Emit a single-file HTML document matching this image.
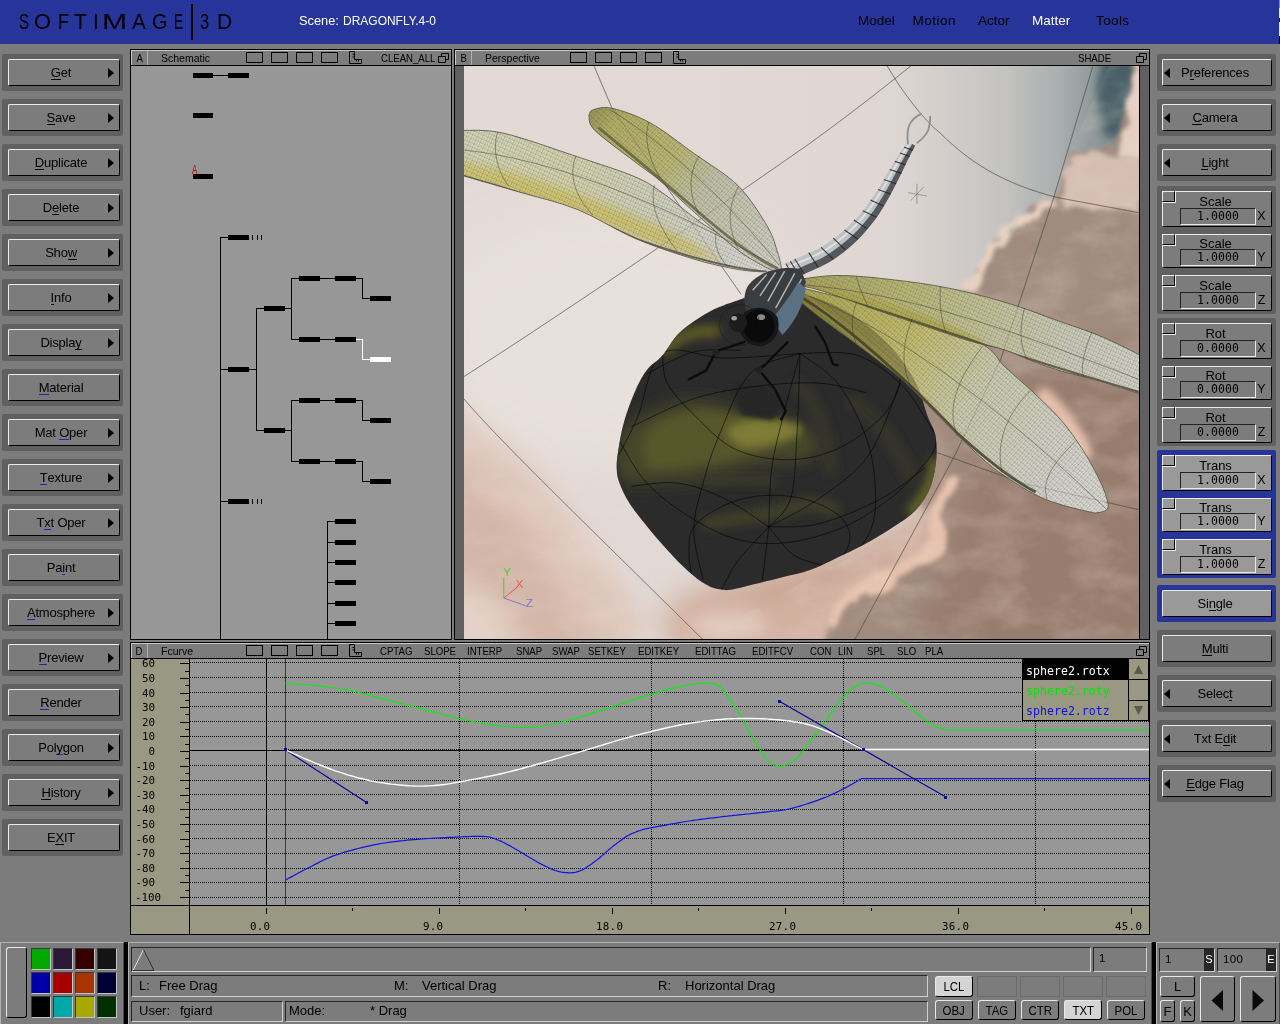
<!DOCTYPE html>
<html><head><meta charset="utf-8"><title>SOFTIMAGE 3D - DRAGONFLY</title>
<style>
*{box-sizing:border-box;margin:0;padding:0}
html,body{width:1280px;height:1024px;overflow:hidden;background:#7c7c7c}
body{position:relative;font-family:"Liberation Sans",sans-serif;font-size:13px;color:#000;line-height:1}
.a{position:absolute}
.top{left:0;top:0;width:1279px;height:44px;background:#27359b}
.lg{position:absolute;top:10px;font-size:22.5px;line-height:24px;transform-origin:0 0;white-space:nowrap}
.menu{top:13px;font-size:13.5px;white-space:nowrap;line-height:15px}
.well{position:absolute;width:121px;height:37px;background:#606060;border-radius:2px}
.rw{width:119px}
.btn{position:absolute;left:6px;top:5px;width:112px;height:27px;background:#7c7c7c;border:1px solid;border-color:#ececec #000 #000 #ececec;border-radius:2px;text-align:center;line-height:25px;font-size:13px;letter-spacing:-0.2px;white-space:nowrap}
.rw .btn{left:5px;width:110px}
.btn span.t{position:absolute;left:0;width:104px;top:0;text-align:center}
.rw .btn span.t{left:0px;width:104px}
.ar{position:absolute;right:5px;top:8px;width:0;height:0;border-left:6px solid #000;border-top:5.5px solid transparent;border-bottom:5.5px solid transparent}
.al{position:absolute;left:1px;top:8px;width:0;height:0;border-right:6px solid #000;border-top:5.5px solid transparent;border-bottom:5.5px solid transparent}
u{text-decoration:none;border-bottom:1px solid #000;display:inline-block;line-height:12px}
u.b{border-bottom-color:#1a2ab0}
.grp{position:absolute;left:1157px;width:119px;height:128px;background:#606060;border-radius:2px}
.pbtn{position:absolute;left:5px;width:110px;background:#7c7c7c;border:1px solid;border-color:#ececec #000 #000 #ececec;border-radius:2px}
.pbtn .lb{position:absolute;left:0;width:105px;text-align:center;top:3px;font-size:13px;line-height:14px}
.pbtn .ck{position:absolute;left:-1px;top:-1px;width:13px;height:11px;border:1px solid;border-color:#ececec #000 #000 #ececec;box-shadow:1px 1px 0 #ececec}
.pbtn .fld{position:absolute;left:17px;top:16px;width:76px;height:17px;border:1px solid;border-color:#222 #e8e8e8 #e8e8e8 #222;font-family:"DejaVu Sans Mono",monospace;font-size:11.5px;line-height:15px;text-align:center;letter-spacing:0.1px}
.pbtn .ax{position:absolute;left:92.5px;top:17px;font-size:12.5px;line-height:14px;width:12px;text-align:center}
.sel{background:#27359b}
.sel .btn,.sel .pbtn{background:#999}

.tb{position:absolute;height:17px;background:#7c7c7c;border:1px solid #000;font-size:11px;line-height:15px;white-space:nowrap}
.tb:before{content:"";position:absolute;left:0;top:0;right:0;height:1px;background:#c8c8c8}
.tb:after{content:"";position:absolute;left:0;top:0;bottom:0;width:1px;background:#c8c8c8}
.tb .k{position:absolute;left:1px;top:0.5px;width:16px;height:14.5px;border-right:1px solid #b0b0b0;text-align:center;font-size:11.3px}
.tb .k b{font-weight:400;display:inline-block;transform:scaleX(.85)}
.tb span{position:absolute;top:0.5px;font-size:11.3px;transform-origin:0 0;transform:scaleX(.93)}
.tb span.u{transform:scaleX(.85)}
.tb .r{position:absolute;top:2px;width:17px;height:11px;border:1px solid #000}
.mx{position:absolute;top:2px;width:11px;height:11px}
.mx:before{content:"";position:absolute;right:0;top:0;width:8px;height:8px;border:1px solid #000}
.mx:after{content:"";position:absolute;left:0;bottom:0;width:8px;height:8px;border:1px solid #000;background:#7c7c7c}
.pan{position:absolute;background:#979797;border:1px solid #000;border-top:none}
.nd{position:absolute;width:21px;height:5px;background:#000}
.mono{font-family:"DejaVu Sans Mono",monospace}

.bp{position:absolute;top:942px;height:82px;background:#7c7c7c;border-top:1px solid #b4b4b4;border-left:1px solid #b4b4b4;border-right:1px solid #4a4a4a}
.sk{position:absolute;border:1px solid;border-color:#262626 #d0d0d0 #d0d0d0 #262626;font-size:13px;line-height:19px;white-space:nowrap}
.sk span{position:absolute;top:0}
.sw{position:absolute;width:20px;height:22px;border:1px solid;border-color:#3a3a3a #c4c4c4 #c4c4c4 #3a3a3a}
.rb{position:absolute;border:1px solid;border-color:#e8e8e8 #000 #000 #e8e8e8;border-radius:3px;background:#7c7c7c;text-align:center;font-size:13px}
.rb b{font-weight:400;display:inline-block;transform:scaleX(.88)}
.sl{position:absolute;top:976px;width:40px;height:21px;border:1px solid #6c6c6c}
</style></head><body>
<div id="app" style="position:absolute;left:0;top:0;width:1280px;height:1024px;will-change:transform">
<div class="a top"></div>
<div class="a" style="left:1279px;top:0;width:1px;height:44px;background:linear-gradient(#8a8a8a 0 8px,#e8e8e8 8px 18px,#10108a 18px 22px,#e8e8e8 22px 36px,#000 36px)"></div>
<span class="lg" style="left:18.88px;transform:scaleX(0.671)">S</span><span class="lg" style="left:34.14px;transform:scaleX(0.968)">O</span><span class="lg" style="left:57.65px;transform:scaleX(0.796)">F</span><span class="lg" style="left:74.23px;transform:scaleX(0.931)">T</span><span class="lg" style="left:92.72px;transform:scaleX(0.925)">I</span><span class="lg" style="left:102.42px;transform:scaleX(1.342)">M</span><span class="lg" style="left:131.90px;transform:scaleX(0.922)">A</span><span class="lg" style="left:151.83px;transform:scaleX(0.890)">G</span><span class="lg" style="left:174.32px;transform:scaleX(0.600)">E</span><span class="lg" style="left:199.72px;transform:scaleX(0.730)">3</span><span class="lg" style="left:216.72px;transform:scaleX(0.934)">D</span><div class="a" style="left:191px;top:4px;width:2px;height:36px;background:#000"></div>
<div class="a menu" style="left:299px;color:#fff;transform-origin:0 0;transform:scaleX(.95)">Scene:</div><div class="a menu" style="left:343px;color:#fff;transform-origin:0 0;transform:scaleX(.888)">DRAGONFLY.4-0</div>
<div class="a menu" style="left:858px">Model</div>
<div class="a menu" style="left:912.5px;letter-spacing:.5px">Motion</div>
<div class="a menu" style="left:978px">Actor</div>
<div class="a menu" style="left:1032px;color:#fff">Matter</div>
<div class="a menu" style="left:1096px;letter-spacing:.4px">Tools</div>
<div class="well" style="left:2px;top:54px"><div class="btn"><span class="t"><u>G</u>et</span><i class="ar"></i></div></div>
<div class="well" style="left:2px;top:99px"><div class="btn"><span class="t"><u>S</u>ave</span><i class="ar"></i></div></div>
<div class="well" style="left:2px;top:144px"><div class="btn"><span class="t"><u>D</u>uplicate</span><i class="ar"></i></div></div>
<div class="well" style="left:2px;top:189px"><div class="btn"><span class="t">D<u>e</u>lete</span><i class="ar"></i></div></div>
<div class="well" style="left:2px;top:234px"><div class="btn"><span class="t">Sho<u>w</u></span><i class="ar"></i></div></div>
<div class="well" style="left:2px;top:279px"><div class="btn"><span class="t"><u>I</u>nfo</span><i class="ar"></i></div></div>
<div class="well" style="left:2px;top:324px"><div class="btn"><span class="t">Displa<u>y</u></span><i class="ar"></i></div></div>
<div class="well" style="left:2px;top:369px"><div class="btn"><span class="t"><u class="b">M</u>aterial</span></div></div>
<div class="well" style="left:2px;top:414px"><div class="btn"><span class="t">Mat <u class="b">O</u>per</span><i class="ar"></i></div></div>
<div class="well" style="left:2px;top:459px"><div class="btn"><span class="t"><u class="b">T</u>exture</span><i class="ar"></i></div></div>
<div class="well" style="left:2px;top:504px"><div class="btn"><span class="t">T<u class="b">x</u>t Oper</span><i class="ar"></i></div></div>
<div class="well" style="left:2px;top:549px"><div class="btn"><span class="t">Pa<u class="b">i</u>nt</span></div></div>
<div class="well" style="left:2px;top:594px"><div class="btn"><span class="t"><u class="b">A</u>tmosphere</span><i class="ar"></i></div></div>
<div class="well" style="left:2px;top:639px"><div class="btn"><span class="t"><u class="b">P</u>review</span><i class="ar"></i></div></div>
<div class="well" style="left:2px;top:684px"><div class="btn"><span class="t"><u class="b">R</u>ender</span></div></div>
<div class="well" style="left:2px;top:729px"><div class="btn"><span class="t">Pol<u class="b">y</u>gon</span><i class="ar"></i></div></div>
<div class="well" style="left:2px;top:774px"><div class="btn"><span class="t"><u>H</u>istory</span><i class="ar"></i></div></div>
<div class="well" style="left:2px;top:819px"><div class="btn"><span class="t">E<u>X</u>IT</span></div></div>
<div class="well rw" style="left:1157px;top:54px"><div class="btn"><span class="t">P<u>r</u>eferences</span><i class="al"></i></div></div>
<div class="well rw" style="left:1157px;top:99px"><div class="btn"><span class="t"><u>C</u>amera</span><i class="al"></i></div></div>
<div class="well rw" style="left:1157px;top:144px"><div class="btn"><span class="t"><u>L</u>ight</span><i class="al"></i></div></div>
<div class="well rw sel" style="left:1157px;top:585px"><div class="btn"><span class="t">Si<u>n</u>gle</span></div></div>
<div class="well rw" style="left:1157px;top:630px"><div class="btn"><span class="t"><u>M</u>ulti</span></div></div>
<div class="well rw" style="left:1157px;top:675px"><div class="btn"><span class="t">Selec<u>t</u></span><i class="al"></i></div></div>
<div class="well rw" style="left:1157px;top:720px"><div class="btn"><span class="t">Txt E<u>d</u>it</span><i class="al"></i></div></div>
<div class="well rw" style="left:1157px;top:765px"><div class="btn"><span class="t"><u>E</u>dge Flag</span><i class="al"></i></div></div>
<div class="grp" style="top:186px"><div class="pbtn" style="top:5px;height:36px"><i class="ck"></i><span class="lb" style="top:3px">Scale</span><span class="fld" style="top:16px">1.0000</span><span class="ax" style="top:17px">X</span></div><div class="pbtn" style="top:48px;height:34px"><i class="ck"></i><span class="lb" style="top:2px">Scale</span><span class="fld" style="top:14px">1.0000</span><span class="ax" style="top:15px">Y</span></div><div class="pbtn" style="top:89px;height:36px"><i class="ck"></i><span class="lb" style="top:3px">Scale</span><span class="fld" style="top:16px">1.0000</span><span class="ax" style="top:17px">Z</span></div></div>
<div class="grp" style="top:318px"><div class="pbtn" style="top:5px;height:36px"><i class="ck"></i><span class="lb" style="top:3px">Rot</span><span class="fld" style="top:16px">0.0000</span><span class="ax" style="top:17px">X</span></div><div class="pbtn" style="top:48px;height:34px"><i class="ck"></i><span class="lb" style="top:2px">Rot</span><span class="fld" style="top:14px">0.0000</span><span class="ax" style="top:15px">Y</span></div><div class="pbtn" style="top:89px;height:36px"><i class="ck"></i><span class="lb" style="top:3px">Rot</span><span class="fld" style="top:16px">0.0000</span><span class="ax" style="top:17px">Z</span></div></div>
<div class="grp sel" style="top:450px"><div class="pbtn" style="top:5px;height:36px"><i class="ck"></i><span class="lb" style="top:3px">Trans</span><span class="fld" style="top:16px">1.0000</span><span class="ax" style="top:17px">X</span></div><div class="pbtn" style="top:48px;height:34px"><i class="ck"></i><span class="lb" style="top:2px">Trans</span><span class="fld" style="top:14px">1.0000</span><span class="ax" style="top:15px">Y</span></div><div class="pbtn" style="top:89px;height:36px"><i class="ck"></i><span class="lb" style="top:3px">Trans</span><span class="fld" style="top:16px">1.0000</span><span class="ax" style="top:17px">Z</span></div></div>
<div class="tb" style="left:130px;top:49px;width:322px"><div class="k"><b>A</b></div><span style="left:30px">Schematic</span><i class="r" style="left:115px"></i><i class="r" style="left:140px"></i><i class="r" style="left:165px"></i><i class="r" style="left:190px"></i><svg class="a" style="left:218px;top:1px" width="14" height="14" viewBox="0 0 14 14"><path d="M0.5 0.5h5v8h7v4h-12z M3.5 3.5h2 M3.5 6h2 M7.5 8.5v2 M9.5 8.5v2" fill="none" stroke="#000" stroke-width="1"/></svg><span class="u" style="left:250px">CLEAN_ALL</span><svg class="a" style="left:307px;top:3px" width="11" height="10" viewBox="0 0 11 10"><path d="M3.5 0.5h7v6h-7z" fill="none" stroke="#000"/><path d="M0.5 3.5h7v6h-7z" fill="#7c7c7c" stroke="#000"/></svg></div>
<div class="pan" style="left:130px;top:66px;width:322px;height:574px;overflow:hidden"><i class="nd" style="left:62px;top:7px;width:20px"></i><i class="a" style="left:82px;top:9px;width:15px;height:1px;background:#000"></i><i class="nd" style="left:97px;top:7px"></i><i class="nd" style="left:62px;top:47px;width:20px"></i><i class="nd" style="left:62px;top:108px;width:20px"></i><span class="a" style="left:61px;top:98px;color:#c40808;font-size:12px;line-height:12px;transform-origin:0 0;transform:scaleX(.66)">A</span><i class="a" style="left:89px;top:171px;width:1px;height:403px;background:#000"></i><i class="a" style="left:89px;top:171px;width:8px;height:1px;background:#000"></i><i class="nd" style="left:97px;top:169px"></i><i class="a" style="left:121px;top:169px;width:1px;height:5px;background:#000"></i><i class="a" style="left:126px;top:169px;width:1px;height:5px;background:#000"></i><i class="a" style="left:130px;top:169px;width:1px;height:5px;background:#000"></i><i class="a" style="left:89px;top:303px;width:8px;height:1px;background:#000"></i><i class="nd" style="left:97px;top:301px"></i><i class="a" style="left:118px;top:303px;width:7px;height:1px;background:#000"></i><i class="a" style="left:125px;top:242px;width:1px;height:123px;background:#000"></i><i class="a" style="left:125px;top:242px;width:8px;height:1px;background:#000"></i><i class="nd" style="left:133px;top:240px"></i><i class="a" style="left:154px;top:242px;width:6px;height:1px;background:#000"></i><i class="a" style="left:160px;top:212px;width:1px;height:62px;background:#000"></i><i class="a" style="left:160px;top:212px;width:8px;height:1px;background:#000"></i><i class="nd" style="left:168px;top:210px"></i><i class="a" style="left:189px;top:212px;width:15px;height:1px;background:#000"></i><i class="nd" style="left:204px;top:210px"></i><i class="a" style="left:160px;top:273px;width:8px;height:1px;background:#000"></i><i class="nd" style="left:168px;top:271px"></i><i class="a" style="left:189px;top:273px;width:15px;height:1px;background:#000"></i><i class="nd" style="left:204px;top:271px"></i><i class="a" style="left:125px;top:364px;width:8px;height:1px;background:#000"></i><i class="nd" style="left:133px;top:362px"></i><i class="a" style="left:154px;top:364px;width:6px;height:1px;background:#000"></i><i class="a" style="left:160px;top:334px;width:1px;height:62px;background:#000"></i><i class="a" style="left:160px;top:334px;width:8px;height:1px;background:#000"></i><i class="nd" style="left:168px;top:332px"></i><i class="a" style="left:189px;top:334px;width:15px;height:1px;background:#000"></i><i class="nd" style="left:204px;top:332px"></i><i class="a" style="left:160px;top:395px;width:8px;height:1px;background:#000"></i><i class="nd" style="left:168px;top:393px"></i><i class="a" style="left:189px;top:395px;width:15px;height:1px;background:#000"></i><i class="nd" style="left:204px;top:393px"></i><i class="a" style="left:225px;top:212px;width:6px;height:1px;background:#000"></i><i class="a" style="left:231px;top:212px;width:1px;height:21px;background:#000"></i><i class="a" style="left:231px;top:232px;width:8px;height:1px;background:#000"></i><i class="nd" style="left:239px;top:230px"></i><i class="a" style="left:225px;top:273px;width:6px;height:1px;background:#fff"></i><i class="a" style="left:231px;top:273px;width:1px;height:21px;background:#fff"></i><i class="a" style="left:231px;top:293px;width:8px;height:1px;background:#fff"></i><i class="nd" style="left:239px;top:291px;background:#fff"></i><i class="a" style="left:225px;top:334px;width:6px;height:1px;background:#000"></i><i class="a" style="left:231px;top:334px;width:1px;height:21px;background:#000"></i><i class="a" style="left:231px;top:354px;width:8px;height:1px;background:#000"></i><i class="nd" style="left:239px;top:352px"></i><i class="a" style="left:225px;top:395px;width:6px;height:1px;background:#000"></i><i class="a" style="left:231px;top:395px;width:1px;height:21px;background:#000"></i><i class="a" style="left:231px;top:415px;width:8px;height:1px;background:#000"></i><i class="nd" style="left:239px;top:413px"></i><i class="a" style="left:89px;top:435px;width:8px;height:1px;background:#000"></i><i class="nd" style="left:97px;top:433px"></i><i class="a" style="left:121px;top:433px;width:1px;height:5px;background:#000"></i><i class="a" style="left:126px;top:433px;width:1px;height:5px;background:#000"></i><i class="a" style="left:130px;top:433px;width:1px;height:5px;background:#000"></i><i class="a" style="left:196px;top:455px;width:1px;height:119px;background:#000"></i><i class="a" style="left:196px;top:455px;width:8px;height:1px;background:#000"></i><i class="nd" style="left:204px;top:453px"></i><i class="a" style="left:196px;top:476px;width:8px;height:1px;background:#000"></i><i class="nd" style="left:204px;top:474px"></i><i class="a" style="left:196px;top:496px;width:8px;height:1px;background:#000"></i><i class="nd" style="left:204px;top:494px"></i><i class="a" style="left:196px;top:516px;width:8px;height:1px;background:#000"></i><i class="nd" style="left:204px;top:514px"></i><i class="a" style="left:196px;top:537px;width:8px;height:1px;background:#000"></i><i class="nd" style="left:204px;top:535px"></i><i class="a" style="left:196px;top:557px;width:8px;height:1px;background:#000"></i><i class="nd" style="left:204px;top:555px"></i></div>
<div class="tb" style="left:454px;top:49px;width:696px"><div class="k"><b>B</b></div><span style="left:30px">Perspective</span><i class="r" style="left:115px"></i><i class="r" style="left:140px"></i><i class="r" style="left:165px"></i><i class="r" style="left:190px"></i><svg class="a" style="left:218px;top:1px" width="14" height="14" viewBox="0 0 14 14"><path d="M0.5 0.5h5v8h7v4h-12z M3.5 3.5h2 M3.5 6h2 M7.5 8.5v2 M9.5 8.5v2" fill="none" stroke="#000" stroke-width="1"/></svg><span class="u" style="left:623px">SHADE</span><svg class="a" style="left:681px;top:3px" width="11" height="10" viewBox="0 0 11 10"><path d="M3.5 0.5h7v6h-7z" fill="none" stroke="#000"/><path d="M0.5 3.5h7v6h-7z" fill="#7c7c7c" stroke="#000"/></svg></div>
<div class="pan" style="left:454px;top:66px;width:696px;height:574px;background:#606060"><div class="a" style="left:9px;top:0;width:676px;height:573px;background:#d8cfcb;border-right:1px solid #000;overflow:hidden"><svg class="a" style="left:0;top:0" width="676" height="574" viewBox="0 0 1206 1024" preserveAspectRatio="none"><defs>
<filter id="b8" filterUnits="userSpaceOnUse" x="-150" y="-150" width="1506" height="1324"><feGaussianBlur stdDeviation="8"/></filter>
<filter id="b14" filterUnits="userSpaceOnUse" x="-150" y="-150" width="1506" height="1324"><feGaussianBlur stdDeviation="14"/></filter>
<filter id="b25" filterUnits="userSpaceOnUse" x="-150" y="-150" width="1506" height="1324"><feGaussianBlur stdDeviation="25"/></filter>
<filter id="b45" filterUnits="userSpaceOnUse" x="-150" y="-150" width="1506" height="1324"><feGaussianBlur stdDeviation="45"/></filter>
<filter id="b4" filterUnits="userSpaceOnUse" x="-150" y="-150" width="1506" height="1324"><feGaussianBlur stdDeviation="4"/></filter>
<filter id="cl" filterUnits="userSpaceOnUse" x="-150" y="-150" width="1506" height="1324"><feTurbulence type="fractalNoise" baseFrequency="0.018" numOctaves="3" seed="7" result="n"/><feDisplacementMap in="SourceGraphic" in2="n" scale="42" xChannelSelector="R" yChannelSelector="G"/><feGaussianBlur stdDeviation="5"/></filter>
<filter id="cl2" filterUnits="userSpaceOnUse" x="-150" y="-150" width="1506" height="1324"><feTurbulence type="fractalNoise" baseFrequency="0.03" numOctaves="3" seed="3" result="n"/><feDisplacementMap in="SourceGraphic" in2="n" scale="30" xChannelSelector="R" yChannelSelector="G"/><feGaussianBlur stdDeviation="4"/></filter>
<filter id="mot" filterUnits="userSpaceOnUse" x="0" y="0" width="1206" height="1024"><feTurbulence type="fractalNoise" baseFrequency="0.012 0.02" numOctaves="4" seed="11"/><feColorMatrix type="matrix" values="0 0 0 0 0.86  0 0 0 0 0.72  0 0 0 0 0.64  1.6 0 0 0 -0.62"/></filter>
<linearGradient id="sky" x1="0" y1="0" x2="1" y2="0"><stop offset="0" stop-color="#e4dad5"/><stop offset="0.62" stop-color="#e0d7d3"/><stop offset="0.72" stop-color="#d2cdca"/><stop offset="0.80" stop-color="#c3c3c1"/><stop offset="0.88" stop-color="#aaafaf"/><stop offset="0.94" stop-color="#8a9698"/><stop offset="1" stop-color="#6e8084"/></linearGradient>
<pattern id="cells" width="9" height="7" patternUnits="userSpaceOnUse" patternTransform="rotate(24)"><path d="M0 0.5H9M0.5 0V7M5 3.5V7" stroke="#34341c" stroke-width="0.9" stroke-opacity="0.4" fill="none"/></pattern>
<pattern id="cells2" width="9" height="7" patternUnits="userSpaceOnUse" patternTransform="rotate(40)"><path d="M0 0.5H9M0.5 0V7M5 3.5V7" stroke="#34341c" stroke-width="0.9" stroke-opacity="0.4" fill="none"/></pattern>
<clipPath id="cmot"><path d="M0 600L160 700L420 1024L1206 1024L1206 0L1150 0L1060 200L900 380L850 560L850 800L640 900L420 1024L0 1024Z"/></clipPath><clipPath id="sph"><path d="M489.0 418.0C473.5 423.4 454.4 429.1 437.0 438.7C419.6 448.2 398.7 462.2 384.8 475.3C370.9 488.4 363.1 506.1 353.5 517.0C343.9 528.0 335.2 530.9 327.3 541.0C319.4 551.1 313.4 561.9 306.4 577.6C299.4 593.3 290.7 616.7 285.5 635.0C280.3 653.3 277.2 673.4 275.0 687.4C272.8 701.4 271.9 709.1 272.4 718.7C272.8 728.3 273.8 734.4 277.7 744.9C281.6 755.4 286.9 767.6 296.0 781.5C305.1 795.4 320.3 813.7 332.5 828.5C344.7 843.3 357.7 858.1 369.0 870.3C380.3 882.5 390.0 892.6 400.5 901.7C411.0 910.9 422.2 919.8 431.8 925.2C441.4 930.6 450.1 932.5 458.0 934.0C465.9 935.5 469.3 935.5 478.9 934.0C488.5 932.5 500.7 928.9 515.5 925.2C530.3 921.5 550.7 916.4 567.7 912.0C584.7 907.6 601.4 904.7 617.4 899.0C633.4 893.3 648.2 885.4 664.0 878.0C679.8 870.6 695.5 863.7 712.3 854.6C729.0 845.5 748.8 833.8 764.5 823.3C780.2 812.8 795.0 804.1 806.3 791.9C817.6 779.7 826.3 765.8 832.4 750.1C838.5 734.4 841.6 713.5 842.9 697.8C844.2 682.1 842.9 668.2 840.3 656.0C837.7 643.8 832.9 639.9 827.2 624.7C821.5 609.5 816.4 585.0 806.0 565.0C795.6 545.0 781.8 523.8 765.0 505.0C748.2 486.2 725.8 466.5 705.0 452.0C684.2 437.5 661.7 426.3 640.0 418.0C618.3 409.7 593.3 404.0 575.0 402.0C556.7 400.0 544.3 403.3 530.0 406.0C515.7 408.7 504.5 412.6 489.0 418.0Z"/></clipPath>
<clipPath id="cLU"><path d="M222.8 88.0C224.1 86.3 223.6 80.1 230.6 78.0C237.6 75.9 247.6 71.6 264.6 75.5C281.6 79.4 308.1 88.1 332.5 101.6C356.9 115.1 384.9 137.8 411.0 156.5C437.1 175.2 467.5 192.2 489.3 214.0C511.1 235.8 529.8 267.0 541.6 287.0C553.4 307.0 555.8 322.2 559.9 334.0C564.0 345.8 565.0 354.0 566.0 358.0L566.0 366.0C562.8 365.5 559.6 369.2 546.8 363.0C534.0 356.8 511.9 346.0 489.3 329.0C466.7 312.0 434.5 281.9 411.0 261.0C387.5 240.1 365.6 218.3 348.2 203.5C330.8 188.7 325.5 186.8 306.4 172.0C287.2 157.2 247.2 128.7 233.3 114.7C219.4 100.7 224.6 92.5 222.8 88.0Z"/></clipPath><clipPath id="cLL"><path d="M-2.0 114.7C10.2 115.6 37.0 112.2 71.0 120.0C105.0 127.8 162.8 148.8 202.0 161.8C241.2 174.9 280.3 187.0 306.4 198.3C332.5 209.6 338.7 215.8 358.7 229.7C378.7 243.6 400.5 264.6 426.6 282.0C452.7 299.4 492.3 320.7 515.5 334.0C538.7 347.3 557.6 357.3 566.0 362.0L568.0 368.0C564.5 368.0 559.9 368.8 546.8 368.0C533.7 367.2 511.9 366.9 489.3 363.0C466.7 359.1 441.5 353.9 411.0 344.7C380.5 335.5 341.2 322.8 306.4 308.0C271.6 293.2 236.8 269.7 202.0 255.8C167.2 241.9 131.4 234.5 97.4 224.5C63.4 214.5 14.6 200.5 -2.0 195.7Z"/></clipPath><clipPath id="cRU"><path d="M578.8 383.7C593.0 382.0 633.1 374.1 664.0 373.7C694.9 373.3 730.9 377.4 764.4 381.2C797.9 385.0 831.3 389.6 864.7 396.3C898.1 403.0 931.5 411.4 965.0 421.4C998.5 431.4 1036.1 446.1 1065.4 456.5C1094.7 466.9 1116.6 473.8 1140.7 484.0C1164.8 494.2 1198.5 512.3 1210.0 518.0L1210.0 586.0C1202.6 583.6 1181.4 576.8 1165.7 571.9C1150.0 567.0 1132.3 561.4 1115.6 556.8C1098.9 552.2 1082.1 549.3 1065.4 544.3C1048.7 539.3 1031.9 533.0 1015.2 526.7C998.5 520.4 980.0 511.6 965.0 506.6C950.0 501.6 937.5 499.9 925.0 496.6C912.5 493.3 908.2 492.5 889.8 486.6C871.4 480.8 839.7 469.9 814.6 461.5C789.5 453.1 768.6 446.4 739.3 436.4C710.0 426.4 665.5 409.4 639.0 401.3C612.5 393.2 589.8 390.2 580.0 388.0Z"/></clipPath><clipPath id="cRL"><path d="M573.7 389.0C594.8 394.2 659.0 409.0 700.0 420.0C741.0 431.0 782.5 442.2 820.0 455.0C857.5 467.8 900.8 483.0 925.0 496.6C949.2 510.2 950.0 522.5 965.0 536.7C980.0 550.9 998.5 566.0 1015.2 581.9C1031.9 597.8 1050.4 614.5 1065.4 632.1C1080.5 649.7 1093.8 668.9 1105.5 687.3C1117.2 705.7 1128.5 727.3 1135.6 742.4C1142.7 757.5 1146.5 769.2 1148.2 777.6C1149.9 786.0 1149.5 789.3 1145.7 792.6C1141.9 795.9 1128.9 796.8 1125.6 797.6L1125.6 797.6C1115.6 795.1 1083.8 788.5 1065.4 782.6C1047.0 776.8 1035.3 773.4 1015.2 762.5C995.1 751.6 965.9 733.3 945.0 717.4C924.1 701.5 907.4 683.9 889.8 667.2C872.2 650.5 857.2 634.6 839.6 617.0C822.0 599.4 805.3 580.2 784.4 561.8C763.5 543.4 738.4 525.0 714.2 506.6C690.0 488.2 660.7 468.2 639.0 451.5C617.3 434.8 594.7 416.2 583.8 406.3C572.9 396.4 575.4 394.4 573.7 392.0Z"/></clipPath>
<linearGradient id="gLU" gradientUnits="userSpaceOnUse" x1="225" y1="90" x2="565" y2="360"><stop offset="0" stop-color="#9c985a"/><stop offset="0.1" stop-color="#b4b068"/><stop offset="0.38" stop-color="#bcb878"/><stop offset="0.55" stop-color="#c2c2aa"/><stop offset="1" stop-color="#d0d0c9"/></linearGradient>
<linearGradient id="gLL" gradientUnits="userSpaceOnUse" x1="0" y1="150" x2="565" y2="365"><stop offset="0" stop-color="#d3d4ba"/><stop offset="0.3" stop-color="#d4d3b0"/><stop offset="0.6" stop-color="#d1d1c0"/><stop offset="0.85" stop-color="#d5d5cf"/><stop offset="1" stop-color="#dededa"/></linearGradient>
<linearGradient id="gRU" gradientUnits="userSpaceOnUse" x1="580" y1="385" x2="1206" y2="550"><stop offset="0" stop-color="#a6a25e"/><stop offset="0.3" stop-color="#b9b678"/><stop offset="0.55" stop-color="#c3c29a"/><stop offset="0.8" stop-color="#cbcbbd"/><stop offset="1" stop-color="#d0d0c8"/></linearGradient>
<linearGradient id="gRL" gradientUnits="userSpaceOnUse" x1="575" y1="390" x2="1150" y2="790"><stop offset="0" stop-color="#aea652"/><stop offset="0.35" stop-color="#c3bd72"/><stop offset="0.55" stop-color="#cbcbb0"/><stop offset="0.8" stop-color="#d2d2ca"/><stop offset="1" stop-color="#dbdbd6"/></linearGradient>
</defs><rect width="1206" height="1024" fill="url(#sky)"/><ellipse cx="260" cy="480" rx="330" ry="230" fill="#e9e1db" filter="url(#b45)" opacity="0.9"/><path d="M-40 600L120 720L330 1000L260 1080L-40 1080Z" fill="#dec6ba" filter="url(#b25)"/><path d="M-40 700L90 800L250 1060L-40 1060Z" fill="#d3b7a8" filter="url(#b25)"/><path d="M-40 900L60 960L120 1060L-40 1060Z" fill="#e4d2c8" filter="url(#b25)"/><path d="M360 960L500 890L700 860L830 780L900 820L860 1060L360 1060Z" fill="#d2b1a1" filter="url(#b25)"/><path d="M520 950C600 930 680 900 760 860" stroke="#c6a494" stroke-width="26" fill="none" filter="url(#b14)" opacity="0.8"/><ellipse cx="470" cy="1000" rx="70" ry="26" fill="#e6d0c4" filter="url(#b14)" opacity="0.8"/><path d="M1140 -20L1210 -20L1195 60L1172 135L1140 120L1128 40Z" fill="#4a6068" filter="url(#b8)"/><path d="M902 392C915 360 945 315 971 285C1000 262 1035 252 1053 241C1062 220 1066 200 1069 183C1072 172 1074 166 1078 163C1100 152 1120 148 1135 147C1150 148 1160 152 1167 155C1170 135 1172 118 1175 102C1180 80 1184 60 1188 41L1200 -20L1260 -20L1260 1080L600 1080C640 1000 686 943 738 915C811 890 853 855 845 802C846 785 840 765 800 750C770 700 790 560 860 500C880 470 892 430 902 392Z" fill="#a18b7e" filter="url(#cl)"/><path d="M960 560L1260 480L1260 1080L780 1080C850 900 900 700 960 560Z" fill="#967c6d" filter="url(#b25)" opacity="0.9"/><ellipse cx="828" cy="715" rx="34" ry="80" fill="#ab9384" filter="url(#b8)"/><path d="M1066 250C1068 215 1072 180 1080 168C1110 152 1140 150 1168 160L1206 160L1206 255C1160 262 1110 262 1066 250Z" fill="#d6beb2" filter="url(#cl2)"/><path d="M1172 160C1174 120 1182 70 1200 -10L1230 -10L1230 170Z" fill="#e6cec2" filter="url(#cl2)"/><path d="M902 396C915 362 945 318 971 289C1000 266 1035 256 1056 244" stroke="#e8d0c0" stroke-width="14" fill="none" filter="url(#cl2)" stroke-linecap="round"/><path d="M864 742C843 790 853 850 811 886C760 905 700 930 660 985" stroke="#e6c2ae" stroke-width="26" fill="none" filter="url(#cl)" stroke-linecap="round"/><path d="M1035 590C1065 620 1090 650 1105 690" stroke="#e6c0ac" stroke-width="30" fill="none" filter="url(#b8)" stroke-linecap="round"/><g clip-path="url(#cmot)"><rect width="1206" height="1024" filter="url(#mot)" opacity="0.32"/></g><path d="M232 0L264 75L494 407 M0 554C120 478 400 290 617 138C690 85 750 38 797 0 M755 0C790 60 830 105 850 120C900 170 960 210 1060 235L1206 262 M1122 0L1052 235L958 522L874 698L697 1024 M0 594C60 665 200 800 427 1024 M845 690L1000 745L1206 792" stroke="#4a4a48" stroke-width="1.1" fill="none" opacity="0.8"/><path d="M489.0 418.0C473.5 423.4 454.4 429.1 437.0 438.7C419.6 448.2 398.7 462.2 384.8 475.3C370.9 488.4 363.1 506.1 353.5 517.0C343.9 528.0 335.2 530.9 327.3 541.0C319.4 551.1 313.4 561.9 306.4 577.6C299.4 593.3 290.7 616.7 285.5 635.0C280.3 653.3 277.2 673.4 275.0 687.4C272.8 701.4 271.9 709.1 272.4 718.7C272.8 728.3 273.8 734.4 277.7 744.9C281.6 755.4 286.9 767.6 296.0 781.5C305.1 795.4 320.3 813.7 332.5 828.5C344.7 843.3 357.7 858.1 369.0 870.3C380.3 882.5 390.0 892.6 400.5 901.7C411.0 910.9 422.2 919.8 431.8 925.2C441.4 930.6 450.1 932.5 458.0 934.0C465.9 935.5 469.3 935.5 478.9 934.0C488.5 932.5 500.7 928.9 515.5 925.2C530.3 921.5 550.7 916.4 567.7 912.0C584.7 907.6 601.4 904.7 617.4 899.0C633.4 893.3 648.2 885.4 664.0 878.0C679.8 870.6 695.5 863.7 712.3 854.6C729.0 845.5 748.8 833.8 764.5 823.3C780.2 812.8 795.0 804.1 806.3 791.9C817.6 779.7 826.3 765.8 832.4 750.1C838.5 734.4 841.6 713.5 842.9 697.8C844.2 682.1 842.9 668.2 840.3 656.0C837.7 643.8 832.9 639.9 827.2 624.7C821.5 609.5 816.4 585.0 806.0 565.0C795.6 545.0 781.8 523.8 765.0 505.0C748.2 486.2 725.8 466.5 705.0 452.0C684.2 437.5 661.7 426.3 640.0 418.0C618.3 409.7 593.3 404.0 575.0 402.0C556.7 400.0 544.3 403.3 530.0 406.0C515.7 408.7 504.5 412.6 489.0 418.0Z" fill="#2b2b2b"/><g clip-path="url(#sph)"><path d="M285.0 650.0C302.3 627.5 351.9 607.7 382.0 600.0C412.1 592.3 445.2 599.5 465.6 604.0C486.0 608.5 487.0 622.2 504.6 627.0C522.2 631.8 553.6 629.5 571.5 632.7C589.4 635.9 600.6 638.1 612.0 646.0C623.4 653.9 642.0 670.2 640.0 680.0C638.0 689.8 619.8 699.7 600.0 705.0C580.2 710.3 548.4 707.0 521.4 712.0C494.3 717.0 465.6 730.0 437.7 735.0C409.8 740.0 380.6 742.0 354.0 742.0C327.4 742.0 289.5 750.3 278.0 735.0C266.5 719.7 267.7 672.5 285.0 650.0Z" fill="#47472a" filter="url(#b14)"/><path d="M330.0 650.0C341.7 633.8 376.7 623.0 400.0 618.0C423.3 613.0 443.3 616.3 470.0 620.0C496.7 623.7 538.3 633.3 560.0 640.0C581.7 646.7 606.7 651.7 600.0 660.0C593.3 668.3 550.0 681.3 520.0 690.0C490.0 698.7 451.7 707.8 420.0 712.0C388.3 716.2 345.0 725.3 330.0 715.0C315.0 704.7 318.3 666.2 330.0 650.0Z" fill="#56562c" filter="url(#b8)"/><path d="M470.0 648.0C473.3 639.7 502.5 632.3 520.0 630.0C537.5 627.7 561.0 631.0 575.0 634.0C589.0 637.0 604.8 642.3 604.0 648.0C603.2 653.7 587.3 662.7 570.0 668.0C552.7 673.3 516.7 683.3 500.0 680.0C483.3 676.7 466.7 656.3 470.0 648.0Z" fill="#7e7b36" filter="url(#b8)"/><path d="M354 512C375 485 410 468 456 474" stroke="#5a5828" stroke-width="22" fill="none" filter="url(#b8)"/><path d="M588 566C630 590 650 660 655 728" stroke="#343429" stroke-width="26" fill="none" filter="url(#b8)"/><path d="M688 594C745 630 780 694 800 740" stroke="#363629" stroke-width="26" fill="none" filter="url(#b8)"/><path d="M842 700C838 740 820 775 795 800" stroke="#5e5e2c" stroke-width="22" fill="none" filter="url(#b8)"/><path d="M426 817C470 808 532 806 600 784C630 780 650 788 668 795" stroke="#3d3d29" stroke-width="26" fill="none" filter="url(#b8)"/><path d="M426 738H556" stroke="#38382a" stroke-width="20" fill="none" filter="url(#b8)"/><path d="M480 572C510 560 555 568 572 612L548 632L495 622Z" fill="#272727" filter="url(#b4)"/><path d="M354.1 512.8C355.5 521.6 353.2 547.7 362.5 565.8C371.8 583.9 389.9 602.0 409.9 621.5C429.8 641.0 454.4 669.4 482.3 682.9C510.2 696.3 546.4 702.4 577.1 702.4C607.8 702.4 638.4 695.4 666.3 682.9C694.2 670.3 725.8 646.6 744.4 627.1C762.9 607.6 774.1 583.4 777.8 565.8C781.5 548.1 768.5 528.6 766.6 521.2M278.8 671.7C286.7 683.8 305.3 721.9 326.2 744.2C347.1 766.5 377.3 788.8 404.3 805.5C431.2 822.2 459.1 837.1 487.9 844.5C516.7 852.0 545.5 853.8 577.1 850.1C608.7 846.4 645.9 836.2 677.5 822.2C709.0 808.3 740.6 787.8 766.6 766.5C792.7 745.1 821.0 711.7 833.6 694.0C846.1 676.3 840.5 666.1 841.9 660.5M409.9 928.2C408.5 918.9 401.5 890.1 401.5 872.4C401.5 854.7 399.2 837.1 409.9 822.2C420.5 807.4 445.2 792.5 465.6 783.2C486.0 773.9 509.3 768.3 532.5 766.5C555.7 764.6 582.7 766.5 605.0 772.0C627.3 777.6 652.4 788.8 666.3 799.9C680.2 811.1 687.7 825.9 688.6 839.0C689.5 852.0 681.2 868.7 671.9 878.0C662.6 887.3 639.4 891.9 632.9 894.7M599.4 512.8C594.8 530.0 579.9 582.0 571.5 616.0C563.2 649.9 553.9 681.9 549.2 716.3C544.6 750.7 544.6 804.6 543.6 822.2M599.4 512.8C584.5 518.9 534.4 524.4 510.2 549.0C486.0 573.7 468.4 628.0 454.4 660.5C440.5 693.1 434.0 716.3 426.6 744.2C419.1 772.0 409.9 799.0 409.9 827.8C409.9 856.6 423.8 902.1 426.6 917.0M599.4 512.8C610.5 521.6 646.8 541.2 666.3 565.8C685.8 590.4 705.3 630.8 716.5 660.5C727.6 690.3 731.3 717.2 733.2 744.2C735.1 771.1 735.1 799.0 727.6 822.2C720.2 845.5 695.1 873.3 688.6 883.5M599.4 512.8C598.5 537.4 596.6 617.3 593.8 660.5C591.0 703.8 591.0 745.1 582.7 772.0C574.3 799.0 550.2 813.9 543.6 822.2M599.4 512.8C577.1 514.2 506.5 521.2 465.6 521.2C424.7 521.2 380.1 495.2 354.1 512.8C328.1 530.5 322.5 596.9 309.5 627.1C296.5 657.3 281.6 682.9 276.1 694.0M599.4 512.8C616.1 513.3 670.0 506.8 699.8 515.6C729.5 524.4 757.4 547.2 777.8 565.8C798.2 584.4 811.7 611.3 822.4 627.1C833.1 642.9 838.7 655.0 841.9 660.5M543.6 822.2C530.6 813.9 492.5 785.1 465.6 772.0C438.7 759.0 409.9 747.9 382.0 744.2C354.1 740.5 312.3 748.8 298.4 749.8M543.6 822.2C558.5 813.9 603.1 793.4 632.9 772.0C662.6 750.7 697.9 728.4 722.0 694.0C746.2 659.6 768.5 587.1 777.8 565.8M543.6 822.2C541.8 838.0 534.4 901.2 532.5 917.0M543.6 822.2C534.4 832.4 501.8 865.0 487.9 883.5C474.0 902.1 464.7 925.4 460.0 933.7M543.6 822.2C551.1 830.6 571.5 860.8 588.2 872.4C605.0 884.0 634.7 888.7 644.0 891.9M543.6 822.2C558.5 821.3 599.4 825.0 632.9 816.7C666.3 808.3 712.8 788.8 744.4 772.0C775.9 755.3 809.4 725.6 822.4 716.3M298.4 643.8C316.9 635.5 372.7 605.7 409.9 593.6C447.0 581.6 484.2 576.0 521.4 571.4C558.5 566.7 600.3 563.9 632.9 565.8C665.4 567.6 702.5 579.7 716.5 582.5M326.2 549.0C340.2 542.5 382.0 517.0 409.9 510.0C437.7 503.1 479.5 507.7 493.5 507.2" stroke="#000" stroke-width="1.2" fill="none" opacity="0.85"/></g><path d="M-2.0 114.7C10.2 115.6 37.0 112.2 71.0 120.0C105.0 127.8 162.8 148.8 202.0 161.8C241.2 174.9 280.3 187.0 306.4 198.3C332.5 209.6 338.7 215.8 358.7 229.7C378.7 243.6 400.5 264.6 426.6 282.0C452.7 299.4 492.3 320.7 515.5 334.0C538.7 347.3 557.6 357.3 566.0 362.0L568.0 368.0C564.5 368.0 559.9 368.8 546.8 368.0C533.7 367.2 511.9 366.9 489.3 363.0C466.7 359.1 441.5 353.9 411.0 344.7C380.5 335.5 341.2 322.8 306.4 308.0C271.6 293.2 236.8 269.7 202.0 255.8C167.2 241.9 131.4 234.5 97.4 224.5C63.4 214.5 14.6 200.5 -2.0 195.7Z" fill="url(#gLL)"/><g clip-path="url(#cLL)"><path d="M-10 168C100 190 250 240 380 300C420 322 440 335 460 350L400 338C300 305 180 258 -10 204Z" fill="#cfc060" opacity="0.75" filter="url(#b8)"/><path d="M-2 195.7C97 224 202 256 306 308C411 345 489 363 540 367" stroke="#5a5440" stroke-width="3.5" fill="none" opacity=".85"/></g><path d="M-2.0 114.7C10.2 115.6 37.0 112.2 71.0 120.0C105.0 127.8 162.8 148.8 202.0 161.8C241.2 174.9 280.3 187.0 306.4 198.3C332.5 209.6 338.7 215.8 358.7 229.7C378.7 243.6 400.5 264.6 426.6 282.0C452.7 299.4 492.3 320.7 515.5 334.0C538.7 347.3 557.6 357.3 566.0 362.0L568.0 368.0C564.5 368.0 559.9 368.8 546.8 368.0C533.7 367.2 511.9 366.9 489.3 363.0C466.7 359.1 441.5 353.9 411.0 344.7C380.5 335.5 341.2 322.8 306.4 308.0C271.6 293.2 236.8 269.7 202.0 255.8C167.2 241.9 131.4 234.5 97.4 224.5C63.4 214.5 14.6 200.5 -2.0 195.7Z" fill="url(#cells)"/><path d="M-2.0 114.7C10.2 115.6 37.0 112.2 71.0 120.0C105.0 127.8 162.8 148.8 202.0 161.8C241.2 174.9 280.3 187.0 306.4 198.3C332.5 209.6 338.7 215.8 358.7 229.7C378.7 243.6 400.5 264.6 426.6 282.0C452.7 299.4 492.3 320.7 515.5 334.0C538.7 347.3 557.6 357.3 566.0 362.0L568.0 368.0C564.5 368.0 559.9 368.8 546.8 368.0C533.7 367.2 511.9 366.9 489.3 363.0C466.7 359.1 441.5 353.9 411.0 344.7C380.5 335.5 341.2 322.8 306.4 308.0C271.6 293.2 236.8 269.7 202.0 255.8C167.2 241.9 131.4 234.5 97.4 224.5C63.4 214.5 14.6 200.5 -2.0 195.7Z" fill="none" stroke="#4c4c40" stroke-width="1.4"/><path d="M222.8 88.0C224.1 86.3 223.6 80.1 230.6 78.0C237.6 75.9 247.6 71.6 264.6 75.5C281.6 79.4 308.1 88.1 332.5 101.6C356.9 115.1 384.9 137.8 411.0 156.5C437.1 175.2 467.5 192.2 489.3 214.0C511.1 235.8 529.8 267.0 541.6 287.0C553.4 307.0 555.8 322.2 559.9 334.0C564.0 345.8 565.0 354.0 566.0 358.0L566.0 366.0C562.8 365.5 559.6 369.2 546.8 363.0C534.0 356.8 511.9 346.0 489.3 329.0C466.7 312.0 434.5 281.9 411.0 261.0C387.5 240.1 365.6 218.3 348.2 203.5C330.8 188.7 325.5 186.8 306.4 172.0C287.2 157.2 247.2 128.7 233.3 114.7C219.4 100.7 224.6 92.5 222.8 88.0Z" fill="url(#gLU)"/><g clip-path="url(#cLU)"><path d="M240 110C300 160 350 200 420 262C470 305 520 345 560 362" stroke="#5c5a3a" stroke-width="5" fill="none" opacity=".7"/></g><path d="M222.8 88.0C224.1 86.3 223.6 80.1 230.6 78.0C237.6 75.9 247.6 71.6 264.6 75.5C281.6 79.4 308.1 88.1 332.5 101.6C356.9 115.1 384.9 137.8 411.0 156.5C437.1 175.2 467.5 192.2 489.3 214.0C511.1 235.8 529.8 267.0 541.6 287.0C553.4 307.0 555.8 322.2 559.9 334.0C564.0 345.8 565.0 354.0 566.0 358.0L566.0 366.0C562.8 365.5 559.6 369.2 546.8 363.0C534.0 356.8 511.9 346.0 489.3 329.0C466.7 312.0 434.5 281.9 411.0 261.0C387.5 240.1 365.6 218.3 348.2 203.5C330.8 188.7 325.5 186.8 306.4 172.0C287.2 157.2 247.2 128.7 233.3 114.7C219.4 100.7 224.6 92.5 222.8 88.0Z" fill="url(#cells2)"/><path d="M222.8 88.0C224.1 86.3 223.6 80.1 230.6 78.0C237.6 75.9 247.6 71.6 264.6 75.5C281.6 79.4 308.1 88.1 332.5 101.6C356.9 115.1 384.9 137.8 411.0 156.5C437.1 175.2 467.5 192.2 489.3 214.0C511.1 235.8 529.8 267.0 541.6 287.0C553.4 307.0 555.8 322.2 559.9 334.0C564.0 345.8 565.0 354.0 566.0 358.0L566.0 366.0C562.8 365.5 559.6 369.2 546.8 363.0C534.0 356.8 511.9 346.0 489.3 329.0C466.7 312.0 434.5 281.9 411.0 261.0C387.5 240.1 365.6 218.3 348.2 203.5C330.8 188.7 325.5 186.8 306.4 172.0C287.2 157.2 247.2 128.7 233.3 114.7C219.4 100.7 224.6 92.5 222.8 88.0Z" fill="none" stroke="#4c4c40" stroke-width="1.4"/><path d="M573.7 389.0C594.8 394.2 659.0 409.0 700.0 420.0C741.0 431.0 782.5 442.2 820.0 455.0C857.5 467.8 900.8 483.0 925.0 496.6C949.2 510.2 950.0 522.5 965.0 536.7C980.0 550.9 998.5 566.0 1015.2 581.9C1031.9 597.8 1050.4 614.5 1065.4 632.1C1080.5 649.7 1093.8 668.9 1105.5 687.3C1117.2 705.7 1128.5 727.3 1135.6 742.4C1142.7 757.5 1146.5 769.2 1148.2 777.6C1149.9 786.0 1149.5 789.3 1145.7 792.6C1141.9 795.9 1128.9 796.8 1125.6 797.6L1125.6 797.6C1115.6 795.1 1083.8 788.5 1065.4 782.6C1047.0 776.8 1035.3 773.4 1015.2 762.5C995.1 751.6 965.9 733.3 945.0 717.4C924.1 701.5 907.4 683.9 889.8 667.2C872.2 650.5 857.2 634.6 839.6 617.0C822.0 599.4 805.3 580.2 784.4 561.8C763.5 543.4 738.4 525.0 714.2 506.6C690.0 488.2 660.7 468.2 639.0 451.5C617.3 434.8 594.7 416.2 583.8 406.3C572.9 396.4 575.4 394.4 573.7 392.0Z" fill="url(#gRL)"/><g clip-path="url(#cRL)"><path d="M489.0 418.0C473.5 423.4 454.4 429.1 437.0 438.7C419.6 448.2 398.7 462.2 384.8 475.3C370.9 488.4 363.1 506.1 353.5 517.0C343.9 528.0 335.2 530.9 327.3 541.0C319.4 551.1 313.4 561.9 306.4 577.6C299.4 593.3 290.7 616.7 285.5 635.0C280.3 653.3 277.2 673.4 275.0 687.4C272.8 701.4 271.9 709.1 272.4 718.7C272.8 728.3 273.8 734.4 277.7 744.9C281.6 755.4 286.9 767.6 296.0 781.5C305.1 795.4 320.3 813.7 332.5 828.5C344.7 843.3 357.7 858.1 369.0 870.3C380.3 882.5 390.0 892.6 400.5 901.7C411.0 910.9 422.2 919.8 431.8 925.2C441.4 930.6 450.1 932.5 458.0 934.0C465.9 935.5 469.3 935.5 478.9 934.0C488.5 932.5 500.7 928.9 515.5 925.2C530.3 921.5 550.7 916.4 567.7 912.0C584.7 907.6 601.4 904.7 617.4 899.0C633.4 893.3 648.2 885.4 664.0 878.0C679.8 870.6 695.5 863.7 712.3 854.6C729.0 845.5 748.8 833.8 764.5 823.3C780.2 812.8 795.0 804.1 806.3 791.9C817.6 779.7 826.3 765.8 832.4 750.1C838.5 734.4 841.6 713.5 842.9 697.8C844.2 682.1 842.9 668.2 840.3 656.0C837.7 643.8 832.9 639.9 827.2 624.7C821.5 609.5 816.4 585.0 806.0 565.0C795.6 545.0 781.8 523.8 765.0 505.0C748.2 486.2 725.8 466.5 705.0 452.0C684.2 437.5 661.7 426.3 640.0 418.0C618.3 409.7 593.3 404.0 575.0 402.0C556.7 400.0 544.3 403.3 530.0 406.0C515.7 408.7 504.5 412.6 489.0 418.0Z" fill="#1c1c08" opacity="0.3"/><path d="M575 394C660 440 740 510 800 570C860 630 920 690 960 722L1010 756C920 700 830 600 760 540C700 480 640 440 575 394Z" fill="#bcb044" opacity="0.75" filter="url(#b4)"/><path d="M575 396C680 455 800 570 880 655C930 700 980 740 1020 760" stroke="#3c3828" stroke-width="5" fill="none" opacity=".8"/></g><path d="M573.7 389.0C594.8 394.2 659.0 409.0 700.0 420.0C741.0 431.0 782.5 442.2 820.0 455.0C857.5 467.8 900.8 483.0 925.0 496.6C949.2 510.2 950.0 522.5 965.0 536.7C980.0 550.9 998.5 566.0 1015.2 581.9C1031.9 597.8 1050.4 614.5 1065.4 632.1C1080.5 649.7 1093.8 668.9 1105.5 687.3C1117.2 705.7 1128.5 727.3 1135.6 742.4C1142.7 757.5 1146.5 769.2 1148.2 777.6C1149.9 786.0 1149.5 789.3 1145.7 792.6C1141.9 795.9 1128.9 796.8 1125.6 797.6L1125.6 797.6C1115.6 795.1 1083.8 788.5 1065.4 782.6C1047.0 776.8 1035.3 773.4 1015.2 762.5C995.1 751.6 965.9 733.3 945.0 717.4C924.1 701.5 907.4 683.9 889.8 667.2C872.2 650.5 857.2 634.6 839.6 617.0C822.0 599.4 805.3 580.2 784.4 561.8C763.5 543.4 738.4 525.0 714.2 506.6C690.0 488.2 660.7 468.2 639.0 451.5C617.3 434.8 594.7 416.2 583.8 406.3C572.9 396.4 575.4 394.4 573.7 392.0Z" fill="url(#cells2)"/><path d="M573.7 389.0C594.8 394.2 659.0 409.0 700.0 420.0C741.0 431.0 782.5 442.2 820.0 455.0C857.5 467.8 900.8 483.0 925.0 496.6C949.2 510.2 950.0 522.5 965.0 536.7C980.0 550.9 998.5 566.0 1015.2 581.9C1031.9 597.8 1050.4 614.5 1065.4 632.1C1080.5 649.7 1093.8 668.9 1105.5 687.3C1117.2 705.7 1128.5 727.3 1135.6 742.4C1142.7 757.5 1146.5 769.2 1148.2 777.6C1149.9 786.0 1149.5 789.3 1145.7 792.6C1141.9 795.9 1128.9 796.8 1125.6 797.6L1125.6 797.6C1115.6 795.1 1083.8 788.5 1065.4 782.6C1047.0 776.8 1035.3 773.4 1015.2 762.5C995.1 751.6 965.9 733.3 945.0 717.4C924.1 701.5 907.4 683.9 889.8 667.2C872.2 650.5 857.2 634.6 839.6 617.0C822.0 599.4 805.3 580.2 784.4 561.8C763.5 543.4 738.4 525.0 714.2 506.6C690.0 488.2 660.7 468.2 639.0 451.5C617.3 434.8 594.7 416.2 583.8 406.3C572.9 396.4 575.4 394.4 573.7 392.0Z" fill="none" stroke="#4c4c40" stroke-width="1.4"/><path d="M578.8 383.7C593.0 382.0 633.1 374.1 664.0 373.7C694.9 373.3 730.9 377.4 764.4 381.2C797.9 385.0 831.3 389.6 864.7 396.3C898.1 403.0 931.5 411.4 965.0 421.4C998.5 431.4 1036.1 446.1 1065.4 456.5C1094.7 466.9 1116.6 473.8 1140.7 484.0C1164.8 494.2 1198.5 512.3 1210.0 518.0L1210.0 586.0C1202.6 583.6 1181.4 576.8 1165.7 571.9C1150.0 567.0 1132.3 561.4 1115.6 556.8C1098.9 552.2 1082.1 549.3 1065.4 544.3C1048.7 539.3 1031.9 533.0 1015.2 526.7C998.5 520.4 980.0 511.6 965.0 506.6C950.0 501.6 937.5 499.9 925.0 496.6C912.5 493.3 908.2 492.5 889.8 486.6C871.4 480.8 839.7 469.9 814.6 461.5C789.5 453.1 768.6 446.4 739.3 436.4C710.0 426.4 665.5 409.4 639.0 401.3C612.5 393.2 589.8 390.2 580.0 388.0Z" fill="url(#gRU)"/><g clip-path="url(#cRU)"><path d="M600 390C700 400 820 440 925 490L925 500C820 460 700 420 600 398Z" fill="#b0a84c" opacity="0.8" filter="url(#b4)"/><path d="M585 390C700 420 820 460 925 496C1000 520 1100 552 1206 582" stroke="#3c3828" stroke-width="4" fill="none" opacity=".7"/></g><path d="M578.8 383.7C593.0 382.0 633.1 374.1 664.0 373.7C694.9 373.3 730.9 377.4 764.4 381.2C797.9 385.0 831.3 389.6 864.7 396.3C898.1 403.0 931.5 411.4 965.0 421.4C998.5 431.4 1036.1 446.1 1065.4 456.5C1094.7 466.9 1116.6 473.8 1140.7 484.0C1164.8 494.2 1198.5 512.3 1210.0 518.0L1210.0 586.0C1202.6 583.6 1181.4 576.8 1165.7 571.9C1150.0 567.0 1132.3 561.4 1115.6 556.8C1098.9 552.2 1082.1 549.3 1065.4 544.3C1048.7 539.3 1031.9 533.0 1015.2 526.7C998.5 520.4 980.0 511.6 965.0 506.6C950.0 501.6 937.5 499.9 925.0 496.6C912.5 493.3 908.2 492.5 889.8 486.6C871.4 480.8 839.7 469.9 814.6 461.5C789.5 453.1 768.6 446.4 739.3 436.4C710.0 426.4 665.5 409.4 639.0 401.3C612.5 393.2 589.8 390.2 580.0 388.0Z" fill="url(#cells)"/><path d="M578.8 383.7C593.0 382.0 633.1 374.1 664.0 373.7C694.9 373.3 730.9 377.4 764.4 381.2C797.9 385.0 831.3 389.6 864.7 396.3C898.1 403.0 931.5 411.4 965.0 421.4C998.5 431.4 1036.1 446.1 1065.4 456.5C1094.7 466.9 1116.6 473.8 1140.7 484.0C1164.8 494.2 1198.5 512.3 1210.0 518.0L1210.0 586.0C1202.6 583.6 1181.4 576.8 1165.7 571.9C1150.0 567.0 1132.3 561.4 1115.6 556.8C1098.9 552.2 1082.1 549.3 1065.4 544.3C1048.7 539.3 1031.9 533.0 1015.2 526.7C998.5 520.4 980.0 511.6 965.0 506.6C950.0 501.6 937.5 499.9 925.0 496.6C912.5 493.3 908.2 492.5 889.8 486.6C871.4 480.8 839.7 469.9 814.6 461.5C789.5 453.1 768.6 446.4 739.3 436.4C710.0 426.4 665.5 409.4 639.0 401.3C612.5 393.2 589.8 390.2 580.0 388.0Z" fill="none" stroke="#4c4c40" stroke-width="1.4"/><path d="M60 118C50 150 60 190 80 214 M200 160C185 195 200 235 230 266 M340 212C330 250 350 290 380 330 M450 298C445 320 455 340 470 358 M0 150C150 165 350 240 560 360 M330 100C320 130 330 165 350 200 M420 160C400 190 400 230 420 265 M490 215C470 250 470 290 490 328 M260 78C350 130 480 250 562 355 M700 376C705 395 712 410 720 428 M850 394C848 420 850 450 860 476 M1000 432C990 470 992 500 1005 524 M1120 476C1105 510 1100 540 1105 554 M600 390C800 405 1000 480 1206 560 M700 422C690 450 690 470 700 496 M800 450C780 500 780 540 800 576 M925 500C880 560 860 610 880 660 M1010 580C960 630 950 680 960 726 M1090 670C1050 710 1030 740 1040 772 M585 398C800 480 1000 650 1145 790" stroke="#2e2e24" stroke-width="1.1" fill="none" opacity="0.7"/><path d="M232 0L264 75L494 407 M0 554C120 478 400 290 617 138C690 85 750 38 797 0 M755 0C790 60 830 105 850 120C900 170 960 210 1060 235L1206 262 M1122 0L1052 235L958 522L874 698L697 1024 M0 594C60 665 200 800 427 1024 M845 690L1000 745L1206 792" stroke="#3a3a30" stroke-width="1" fill="none" opacity="0.4"/><path d="M574.0 352.3C576.7 351.0 579.5 349.3 590.2 344.3C601.0 339.4 623.7 331.2 638.6 322.4C653.5 313.6 667.5 302.4 679.7 291.6C691.9 280.8 702.1 269.5 712.0 257.6C721.8 245.6 730.8 232.1 738.8 220.0C746.7 207.8 753.0 195.3 759.5 184.6C766.0 173.8 772.2 163.8 777.7 155.5C783.2 147.2 789.9 138.1 792.4 134.6L805.0 142.4C803.1 146.1 797.7 155.7 793.3 164.5C788.9 173.3 784.1 183.7 778.5 195.0C772.8 206.3 766.8 219.2 759.2 232.4C751.7 245.6 743.2 260.8 733.2 274.2C723.2 287.6 712.4 300.6 699.3 313.0C686.1 325.4 670.4 338.4 654.4 348.4C638.4 358.4 614.8 367.6 603.4 372.9C592.0 378.1 588.9 378.6 586.0 379.7Z" fill="#bfc2c4"/><path d="M580.9 368.1C583.7 366.8 586.7 365.9 597.8 360.7C608.9 355.6 632.2 346.8 647.7 337.3C663.2 327.9 678.2 315.6 691.0 303.9C703.7 292.2 714.3 279.9 724.2 267.1C734.1 254.4 742.8 239.9 750.5 227.1C758.2 214.4 764.4 201.7 770.4 190.6C776.4 179.5 781.8 169.3 786.7 160.7C791.5 152.1 797.5 142.7 799.6 139.1L805.0 142.4C803.1 146.1 797.7 155.7 793.3 164.5C788.9 173.3 784.1 183.7 778.5 195.0C772.8 206.3 766.8 219.2 759.2 232.4C751.7 245.6 743.2 260.8 733.2 274.2C723.2 287.6 712.4 300.6 699.3 313.0C686.1 325.4 670.4 338.4 654.4 348.4C638.4 358.4 614.8 367.6 603.4 372.9C592.0 378.1 588.9 378.6 586.0 379.7Z" fill="#54585c"/><path d="M577.3 359.8C580.0 358.5 582.9 357.2 593.8 352.2C604.8 347.1 627.7 338.7 642.9 329.6C658.2 320.4 672.6 308.7 685.1 297.5C697.6 286.2 707.9 274.5 717.8 262.2C727.7 249.8 736.6 235.8 744.4 223.4C752.2 210.9 758.5 198.4 764.7 187.5C771.0 176.6 776.8 166.4 782.0 158.0C787.2 149.5 793.6 140.3 795.9 136.8" fill="none" stroke="#e8e8e8" stroke-width="3.5" opacity=".8"/><path d="M574.0 352.3 L589.7 378.1M582.2 348.3 L598.2 374.7M590.2 344.4 L607.1 371.1M615.1 333.0 L631.8 359.3M637.2 323.4 L658.9 345.0M658.9 307.1 L680.2 328.2M678.8 292.5 L702.9 309.1M695.7 274.7 L719.1 290.6M711.4 258.4 L736.1 270.0M725.2 239.0 L748.6 249.8M738.5 220.4 L761.4 228.5M749.0 202.5 L770.9 210.0M759.6 184.6 L780.4 191.5M768.6 170.1 L787.8 176.2M777.8 155.3 L795.3 161.3M785.1 145.0 L801.2 150.1" stroke="#222" stroke-width="2" fill="none" opacity=".85"/><path d="M792 139C790 122 792 110 795.4 103.7C800 95 808 89 815.3 85.5 M808.6 137C818 130 825 122 828.5 113.7C831 105 832 98 831.8 90.5" stroke="#8c9092" stroke-width="3.2" fill="none" stroke-linecap="round"/><path d="M505 395C520 370 560 355 600 362L610 385C600 420 580 450 550 470L510 450C498 430 498 410 505 395Z" fill="#3a3d40"/><path d="M515 400L540 372M528 410L556 368M542 420L572 366M556 432L590 370M570 445L602 380" stroke="#c8c8c8" stroke-width="2.6" fill="none" opacity="0.85"/><path d="M548 452C566 432 585 406 596 386L610 396C606 425 592 455 568 480Z" fill="#5c7084"/><path d="M500 440C520 425 550 430 560 450C565 475 555 495 530 500C505 500 490 480 490 462Z" fill="#15181b"/><ellipse cx="526" cy="464" rx="28" ry="29" fill="#0a0a0a"/><ellipse cx="489" cy="458" rx="16" ry="17" fill="#1c1c1c"/><ellipse cx="482" cy="450" rx="5" ry="4" fill="#a0a0a0"/><ellipse cx="530" cy="448" rx="7" ry="5" fill="#8a8a8a"/><circle cx="492" cy="462" r="36" fill="none" stroke="#111" stroke-width="1" opacity="0.7"/><path d="M500 492C480 500 460 504 449 510L432 543L401 559 M577 493L527 543L555 577L574 616L566 630 M627 465L644 493L658 532L667 534" stroke="#0c0c0c" stroke-width="4.2" fill="none" stroke-linejoin="round" stroke-linecap="round"/><circle cx="449" cy="511" r="6" fill="#222"/><circle cx="527" cy="543" r="6" fill="#222"/><path d="M808 210V246M792 226L826 232M797 240L820 216" stroke="#77706c" stroke-width="1.1" fill="none"/><path d="M71 949V912" stroke="#40c840" stroke-width="1.6"/><path d="M71 949L95 930" stroke="#e05050" stroke-width="1.6"/><path d="M71 949L110 963" stroke="#7a70d8" stroke-width="1.6"/><text x="70" y="909" font-family="'Liberation Sans',sans-serif" font-size="21" fill="#48d048">Y</text><text x="92" y="931" font-family="'Liberation Sans',sans-serif" font-size="21" fill="#e85858">X</text><text x="110" y="966" font-family="'Liberation Sans',sans-serif" font-size="21" fill="#8070e0">Z</text></svg></div></div>
<div class="tb" style="left:130px;top:642px;width:1020px"><div class="k"><b>D</b></div><span style="left:30px">Fcurve</span><i class="r" style="left:115px"></i><i class="r" style="left:140px"></i><i class="r" style="left:165px"></i><i class="r" style="left:190px"></i><svg class="a" style="left:218px;top:1px" width="14" height="14" viewBox="0 0 14 14"><path d="M0.5 0.5h5v8h7v4h-12z M3.5 3.5h2 M3.5 6h2 M7.5 8.5v2 M9.5 8.5v2" fill="none" stroke="#000" stroke-width="1"/></svg><span class="u" style="left:249px">CPTAG</span><span class="u" style="left:293px">SLOPE</span><span class="u" style="left:336px">INTERP</span><span class="u" style="left:385px">SNAP</span><span class="u" style="left:421px">SWAP</span><span class="u" style="left:457px">SETKEY</span><span class="u" style="left:507px">EDITKEY</span><span class="u" style="left:564px">EDITTAG</span><span class="u" style="left:621px">EDITFCV</span><span class="u" style="left:679px">CON</span><span class="u" style="left:707px">LIN</span><span class="u" style="left:736px">SPL</span><span class="u" style="left:766px">SLO</span><span class="u" style="left:794px">PLA</span><svg class="a" style="left:1005px;top:3px" width="11" height="10" viewBox="0 0 11 10"><path d="M3.5 0.5h7v6h-7z" fill="none" stroke="#000"/><path d="M0.5 3.5h7v6h-7z" fill="#7c7c7c" stroke="#000"/></svg></div>
<div class="pan" style="left:130px;top:659px;width:1020px;height:276px"><svg class="a" style="left:0;top:0" width="1018" height="275" viewBox="0 0 1018 275" font-family="'DejaVu Sans Mono',monospace" font-size="11"><rect x="0" y="0" width="58" height="275" fill="#999983"/><rect x="0" y="247" width="1018" height="28" fill="#999983"/><path d="M59 3.5H1018M59 18.5H1018M59 33.5H1018M59 47.5H1018M59 62.5H1018M59 77.5H1018M59 106.5H1018M59 121.5H1018M59 135.5H1018M59 150.5H1018M59 165.5H1018M59 179.5H1018M59 194.5H1018M59 209.5H1018M59 223.5H1018M59 238.5H1018" stroke="#000" stroke-width="1" stroke-dasharray="1 1" fill="none"/><path d="M328.5 0V246M520.5 0V246M712.5 0V246M904.5 0V246" stroke="#000" stroke-width="1" stroke-dasharray="1 1" fill="none"/><path d="M49 4.5H58M49 19.5H58M49 34.5H58M49 48.5H58M49 63.5H58M49 77.5H58M49 92.5H58M49 107.5H58M49 121.5H58M49 136.5H58M49 150.5H58M49 165.5H58M49 180.5H58M49 194.5H58M49 209.5H58M49 223.5H58M49 238.5H58M54 12.5H58M54 26.5H58M54 41.5H58M54 55.5H58M54 70.5H58M54 85.5H58M54 99.5H58M54 114.5H58M54 129.5H58M54 143.5H58M54 158.5H58M54 172.5H58M54 187.5H58M54 202.5H58M54 216.5H58M54 231.5H58" stroke="#000" stroke-width="1" fill="none"/><text x="24" y="8" text-anchor="end" font-size="10.8">60</text><text x="24" y="23" text-anchor="end" font-size="10.8">50</text><text x="24" y="38" text-anchor="end" font-size="10.8">40</text><text x="24" y="52" text-anchor="end" font-size="10.8">30</text><text x="24" y="67" text-anchor="end" font-size="10.8">20</text><text x="24" y="81" text-anchor="end" font-size="10.8">10</text><text x="24" y="96" text-anchor="end" font-size="10.8">0</text><text x="24" y="111" text-anchor="end" font-size="10.8">-10</text><text x="24" y="125" text-anchor="end" font-size="10.8">-20</text><text x="24" y="140" text-anchor="end" font-size="10.8">-30</text><text x="24" y="154" text-anchor="end" font-size="10.8">-40</text><text x="24" y="169" text-anchor="end" font-size="10.8">-50</text><text x="24" y="184" text-anchor="end" font-size="10.8">-60</text><text x="24" y="198" text-anchor="end" font-size="10.8">-70</text><text x="24" y="213" text-anchor="end" font-size="10.8">-80</text><text x="24" y="227" text-anchor="end" font-size="10.8">-90</text><text x="4" y="242" font-size="10.8">-100</text><path d="M58.5 0V275 M0 246.5H1018 M135.5 0V246 M59 91.5H733" stroke="#000" fill="none"/><text x="119.0" y="271" letter-spacing="0.3" font-size="10.8">0.0</text><text x="292.0" y="271" letter-spacing="0.3" font-size="10.8">9.0</text><text x="465.0" y="271" letter-spacing="0.3" font-size="10.8">18.0</text><text x="638.0" y="271" letter-spacing="0.3" font-size="10.8">27.0</text><text x="811.0" y="271" letter-spacing="0.3" font-size="10.8">36.0</text><text x="984.0" y="271" letter-spacing="0.3" font-size="10.8">45.0</text><path d="M135.5 249V255M221.5 249V252M308.5 249V255M394.5 249V252M481.5 249V255M567.5 249V252M654.5 249V255M740.5 249V252M827.5 249V255M913.5 249V252M1000.5 249V255" stroke="#000" fill="none"/><path d="M154.5 0V246" stroke="#c00000" fill="none"/><path d="M157 90.5H732" stroke="#000" stroke-dasharray="1 1" fill="none"/><polyline points="154.5,24.3 155.9,24.4 157.7,24.5 159.7,24.6 162.0,24.8 164.5,24.9 167.2,25.1 170.0,25.3 172.8,25.5 175.7,25.7 178.5,26.0 181.3,26.2 184.0,26.5 186.6,26.8 189.3,27.1 192.0,27.4 194.8,27.7 197.6,28.0 200.3,28.4 203.1,28.8 205.9,29.2 208.7,29.6 211.5,30.0 214.3,30.5 217.0,31.0 219.7,31.5 222.4,32.1 225.0,32.7 227.7,33.4 230.3,34.0 232.9,34.7 235.6,35.4 238.2,36.1 240.9,36.8 243.6,37.6 246.3,38.3 249.0,39.0 251.7,39.7 254.4,40.4 257.1,41.1 259.8,41.8 262.5,42.6 265.2,43.3 268.0,44.0 270.8,44.8 273.7,45.6 276.7,46.3 279.8,47.2 283.0,48.0 286.4,48.9 290.0,49.8 293.8,50.8 297.7,51.9 301.7,52.9 305.7,53.9 309.7,55.0 313.6,56.0 317.5,57.0 321.2,57.9 324.7,58.7 328.0,59.5 331.1,60.2 334.0,60.9 336.8,61.5 339.4,62.0 342.0,62.5 344.4,63.0 346.9,63.5 349.3,63.9 351.6,64.3 354.1,64.7 356.5,65.1 359.0,65.5 361.6,65.9 364.1,66.2 366.7,66.6 369.3,66.9 371.8,67.2 374.4,67.5 376.9,67.8 379.4,68.0 381.9,68.2 384.3,68.3 386.7,68.4 389.0,68.5 391.3,68.5 393.4,68.5 395.6,68.4 397.7,68.3 399.7,68.2 401.8,68.1 403.8,67.9 405.8,67.6 407.8,67.4 409.9,67.1 411.9,66.8 414.0,66.5 416.1,66.2 418.1,65.8 420.0,65.5 422.0,65.1 423.9,64.7 425.9,64.2 427.9,63.8 430.0,63.2 432.2,62.7 434.5,62.1 437.0,61.4 439.6,60.7 442.4,59.9 445.4,59.0 448.5,58.1 451.7,57.1 455.1,56.1 458.5,55.0 461.9,53.9 465.4,52.8 468.9,51.7 472.3,50.6 475.7,49.5 479.0,48.5 482.3,47.5 485.6,46.4 488.9,45.3 492.2,44.2 495.6,43.1 498.9,42.0 502.2,40.9 505.4,39.9 508.6,38.9 511.7,37.9 514.8,36.9 517.8,36.0 520.7,35.1 523.5,34.3 526.4,33.5 529.1,32.7 531.9,31.9 534.5,31.2 537.2,30.4 539.7,29.8 542.2,29.1 544.5,28.6 546.8,28.0 549.0,27.5 551.1,27.0 553.1,26.7 555.0,26.3 556.9,26.0 558.6,25.7 560.3,25.5 561.9,25.3 563.5,25.1 564.9,24.9 566.3,24.8 567.7,24.6 569.0,24.5 570.2,24.4 571.4,24.2 572.4,24.2 573.4,24.1 574.3,24.0 575.2,24.0 576.0,23.9 576.7,23.9 577.4,23.9 578.1,23.9 578.8,24.0 579.5,24.0 580.1,24.0 580.7,24.1 581.2,24.2 581.7,24.2 582.1,24.3 582.5,24.4 582.9,24.6 583.3,24.7 583.7,24.9 584.1,25.1 584.5,25.3 585.0,25.5 585.5,25.7 585.9,26.0 586.4,26.3 586.9,26.5 587.4,26.8 587.8,27.2 588.3,27.5 588.8,27.9 589.3,28.3 589.9,28.8 590.4,29.4 591.0,30.0 591.6,30.7 592.2,31.4 592.8,32.2 593.4,33.1 594.1,33.9 594.8,34.9 595.4,35.8 596.1,36.8 596.8,37.8 597.5,38.9 598.3,39.9 599.0,41.0 599.8,42.1 600.6,43.2 601.4,44.3 602.2,45.5 603.0,46.6 603.9,47.8 604.7,49.1 605.6,50.3 606.5,51.6 607.3,52.9 608.2,54.2 609.0,55.6 609.8,57.0 610.7,58.4 611.5,59.9 612.3,61.4 613.1,63.0 613.9,64.5 614.8,66.1 615.6,67.7 616.4,69.3 617.3,70.9 618.1,72.4 619.0,74.0 619.9,75.6 620.8,77.2 621.7,78.9 622.7,80.5 623.6,82.2 624.6,83.9 625.5,85.5 626.4,87.1 627.4,88.6 628.3,90.1 629.2,91.4 630.0,92.7 630.8,93.9 631.6,95.0 632.4,96.0 633.1,97.0 633.9,97.9 634.6,98.8 635.4,99.6 636.1,100.3 636.8,101.1 637.5,101.7 638.3,102.4 639.0,103.0 639.8,103.6 640.5,104.1 641.2,104.6 642.0,105.0 642.8,105.4 643.5,105.8 644.2,106.1 645.0,106.3 645.8,106.6 646.5,106.8 647.2,106.9 648.0,107.0 648.8,107.1 649.5,107.1 650.3,107.0 651.0,106.9 651.8,106.8 652.5,106.6 653.3,106.4 654.0,106.2 654.8,105.9 655.5,105.6 656.3,105.3 657.0,105.0 657.7,104.7 658.4,104.3 659.1,104.0 659.8,103.6 660.4,103.2 661.1,102.8 661.8,102.3 662.5,101.7 663.2,101.2 663.9,100.5 664.7,99.8 665.5,99.0 666.3,98.1 667.2,97.2 668.1,96.2 669.0,95.1 670.0,93.9 670.9,92.8 671.9,91.5 672.9,90.3 673.9,89.0 674.9,87.7 675.9,86.3 677.0,85.0 678.1,83.6 679.2,82.2 680.4,80.8 681.6,79.3 682.8,77.7 684.0,76.2 685.2,74.6 686.4,73.1 687.6,71.5 688.8,70.0 689.9,68.5 691.0,67.0 692.1,65.5 693.1,64.1 694.2,62.6 695.2,61.1 696.2,59.7 697.2,58.2 698.2,56.8 699.1,55.4 700.1,54.0 701.1,52.6 702.0,51.3 703.0,50.0 704.0,48.7 704.9,47.4 705.8,46.2 706.7,44.9 707.7,43.7 708.6,42.5 709.5,41.3 710.4,40.2 711.3,39.1 712.2,38.0 713.1,37.0 714.0,36.0 714.9,35.1 715.8,34.1 716.8,33.3 717.7,32.4 718.6,31.6 719.5,30.8 720.4,30.1 721.3,29.4 722.2,28.7 723.2,28.1 724.1,27.5 725.0,27.0 725.9,26.5 726.8,26.1 727.7,25.7 728.6,25.4 729.5,25.0 730.4,24.8 731.3,24.6 732.3,24.4 733.2,24.2 734.1,24.1 735.0,24.0 736.0,24.0 737.0,24.0 737.9,24.0 738.9,24.1 739.9,24.2 740.9,24.4 741.9,24.6 742.9,24.8 743.9,25.1 744.9,25.4 745.9,25.7 747.0,26.1 748.0,26.5 749.0,26.9 750.1,27.4 751.1,27.9 752.2,28.5 753.2,29.0 754.3,29.7 755.4,30.3 756.5,31.0 757.6,31.7 758.7,32.4 759.8,33.2 761.0,34.0 762.2,34.8 763.4,35.7 764.6,36.6 765.8,37.6 767.0,38.6 768.3,39.6 769.5,40.7 770.8,41.7 772.1,42.8 773.4,43.9 774.7,44.9 776.0,46.0 777.3,47.1 778.7,48.2 780.1,49.4 781.5,50.6 782.9,51.8 784.3,53.0 785.8,54.2 787.2,55.4 788.5,56.5 789.9,57.6 791.2,58.6 792.4,59.5 793.6,60.4 794.7,61.2 795.8,62.0 796.9,62.7 797.9,63.5 798.9,64.1 799.9,64.8 800.9,65.4 801.9,65.9 802.9,66.5 803.9,67.0 805.0,67.5 806.1,68.0 807.3,68.4 808.5,68.8 809.8,69.1 811.0,69.5 812.3,69.8 813.5,70.0 814.6,70.3 815.7,70.5 816.6,70.7 817.4,70.8 818.0,71.0 1018,71.0" stroke="#00f400" stroke-width="1.15" fill="none"/><polyline points="154.5,221.0 155.7,220.4 157.1,219.6 158.9,218.6 160.8,217.6 162.9,216.5 165.1,215.2 167.4,214.0 169.8,212.7 172.2,211.5 174.5,210.3 176.8,209.1 179.0,208.0 181.1,207.0 183.1,205.9 185.1,204.9 187.1,203.9 189.1,202.8 191.1,201.8 193.2,200.8 195.3,199.8 197.6,198.9 199.9,197.9 202.4,196.9 205.0,196.0 207.8,195.1 210.7,194.1 213.8,193.2 217.0,192.2 220.3,191.3 223.7,190.4 227.1,189.5 230.5,188.7 233.9,187.9 237.3,187.1 240.7,186.4 244.0,185.7 247.2,185.1 250.4,184.5 253.6,184.0 256.8,183.5 259.9,183.1 263.1,182.7 266.3,182.3 269.6,181.9 272.8,181.6 276.2,181.2 279.5,180.9 283.0,180.6 286.6,180.3 290.4,180.0 294.3,179.7 298.3,179.5 302.3,179.2 306.3,179.0 310.3,178.8 314.2,178.6 318.0,178.4 321.5,178.3 324.9,178.1 328.0,178.0 330.9,177.9 333.5,177.7 336.1,177.6 338.5,177.5 340.7,177.4 342.8,177.4 344.8,177.3 346.8,177.3 348.6,177.3 350.4,177.3 352.1,177.4 353.7,177.5 355.2,177.6 356.6,177.8 357.9,178.0 359.0,178.2 360.1,178.5 361.1,178.8 362.0,179.1 363.0,179.4 363.9,179.8 364.9,180.2 365.9,180.6 367.0,181.0 368.1,181.5 369.3,181.9 370.4,182.4 371.5,183.0 372.7,183.5 373.8,184.1 375.0,184.7 376.2,185.4 377.3,186.0 378.5,186.6 379.8,187.3 381.0,188.0 382.3,188.7 383.6,189.5 384.9,190.2 386.2,191.0 387.6,191.8 388.9,192.7 390.3,193.5 391.7,194.3 393.0,195.1 394.4,195.9 395.7,196.7 397.0,197.5 398.3,198.3 399.6,199.0 400.8,199.8 402.1,200.5 403.4,201.2 404.6,202.0 405.9,202.7 407.1,203.4 408.3,204.1 409.6,204.7 410.8,205.4 412.0,206.0 413.2,206.6 414.4,207.2 415.6,207.8 416.8,208.3 417.9,208.9 419.1,209.4 420.2,209.9 421.4,210.4 422.6,210.9 423.7,211.3 424.9,211.7 426.0,212.0 427.2,212.3 428.3,212.6 429.5,212.8 430.7,213.1 431.9,213.3 433.0,213.4 434.2,213.6 435.3,213.7 436.4,213.7 437.5,213.8 438.6,213.8 439.6,213.8 440.6,213.8 441.5,213.7 442.5,213.6 443.4,213.5 444.2,213.3 445.1,213.1 445.9,212.9 446.8,212.7 447.6,212.4 448.4,212.1 449.2,211.8 450.0,211.5 450.8,211.2 451.6,210.8 452.3,210.4 453.1,210.0 453.8,209.5 454.5,209.1 455.2,208.6 456.0,208.1 456.7,207.6 457.5,207.1 458.2,206.5 459.0,206.0 459.8,205.4 460.6,204.9 461.4,204.3 462.3,203.7 463.1,203.1 464.0,202.4 464.8,201.8 465.7,201.1 466.5,200.5 467.3,199.8 468.2,199.2 469.0,198.5 469.8,197.8 470.6,197.1 471.4,196.4 472.2,195.7 473.0,195.0 473.8,194.3 474.6,193.6 475.4,192.8 476.2,192.1 477.1,191.4 477.9,190.7 478.7,190.0 479.5,189.3 480.4,188.6 481.3,187.9 482.1,187.2 483.0,186.5 483.9,185.8 484.8,185.2 485.6,184.5 486.5,183.8 487.4,183.2 488.2,182.6 489.0,182.0 489.8,181.4 490.6,180.9 491.3,180.3 492.0,179.8 492.7,179.3 493.5,178.8 494.2,178.3 494.9,177.8 495.6,177.3 496.4,176.9 497.2,176.4 498.0,176.0 498.8,175.6 499.7,175.1 500.6,174.7 501.6,174.3 502.5,173.9 503.4,173.5 504.4,173.2 505.3,172.8 506.3,172.4 507.2,172.1 508.1,171.8 509.0,171.5 509.8,171.2 510.4,171.0 510.9,170.8 511.3,170.7 511.8,170.5 512.2,170.4 512.8,170.3 513.6,170.1 514.5,169.9 515.7,169.7 517.2,169.4 519.0,169.0 521.3,168.6 523.9,168.1 526.9,167.5 530.1,166.9 533.6,166.3 537.2,165.6 540.8,164.9 544.5,164.3 548.1,163.6 551.6,163.0 554.9,162.5 558.0,162.0 560.9,161.6 563.7,161.1 566.4,160.8 569.1,160.4 571.7,160.1 574.2,159.8 576.7,159.4 579.2,159.1 581.7,158.9 584.1,158.6 586.6,158.3 589.0,158.0 591.4,157.7 593.9,157.4 596.3,157.2 598.6,156.9 601.0,156.7 603.3,156.4 605.6,156.2 607.9,155.9 610.1,155.7 612.3,155.5 614.5,155.2 616.6,155.0 618.7,154.8 620.7,154.5 622.7,154.3 624.7,154.1 626.6,153.9 628.5,153.7 630.3,153.5 632.1,153.3 633.9,153.1 635.7,152.9 637.3,152.7 639.0,152.5 640.6,152.3 642.1,152.2 643.5,152.0 644.9,151.9 646.3,151.8 647.6,151.7 648.9,151.5 650.2,151.4 651.5,151.2 652.9,151.0 654.3,150.8 655.7,150.5 657.2,150.2 658.7,149.9 660.2,149.5 661.7,149.1 663.3,148.7 664.8,148.2 666.4,147.8 667.9,147.3 669.5,146.9 671.0,146.4 672.5,146.0 674.0,145.5 675.5,145.0 677.0,144.6 678.4,144.1 679.9,143.6 681.4,143.1 682.8,142.6 684.3,142.1 685.7,141.6 687.1,141.1 688.4,140.6 689.7,140.1 691.0,139.6 692.2,139.1 693.4,138.6 694.6,138.2 695.7,137.7 696.9,137.2 697.9,136.7 699.0,136.3 700.0,135.8 701.1,135.4 702.1,134.9 703.0,134.4 704.0,134.0 704.9,133.6 705.9,133.1 706.7,132.7 707.6,132.3 708.4,131.9 709.2,131.5 710.1,131.1 710.9,130.6 711.6,130.2 712.4,129.8 713.2,129.4 714.0,129.0 714.8,128.6 715.6,128.2 716.4,127.7 717.1,127.3 717.9,126.9 718.6,126.5 719.4,126.0 720.1,125.6 720.9,125.2 721.6,124.8 722.3,124.4 723.0,124.0 723.7,123.6 724.4,123.2 725.2,122.8 725.9,122.3 726.7,121.9 727.4,121.5 728.1,121.1 728.8,120.7 729.3,120.4 729.9,120.1 730.3,119.8 730.7,119.6 1018,119.6" stroke="#1414e0" stroke-width="1.2" fill="none"/><path d="M154.5 91.0L234.8 143.0 M648.0 42.0L814.0 137.6" stroke="#0a0a9a" stroke-width="1.2" fill="none"/><polyline points="154.5,91.0 156.2,91.7 158.3,92.7 160.8,93.8 163.6,95.1 166.7,96.4 169.9,97.8 173.2,99.3 176.6,100.8 179.9,102.2 183.1,103.6 186.2,104.9 189.0,106.0 191.7,107.0 194.3,108.1 196.8,109.0 199.3,110.0 201.8,110.9 204.3,111.8 206.7,112.6 209.2,113.4 211.6,114.2 214.1,115.0 216.5,115.8 219.0,116.5 221.5,117.2 224.0,117.9 226.4,118.6 228.9,119.2 231.3,119.8 233.8,120.4 236.2,121.0 238.7,121.6 241.2,122.1 243.8,122.6 246.4,123.1 249.0,123.5 251.7,123.9 254.5,124.3 257.4,124.7 260.3,125.1 263.3,125.4 266.2,125.8 269.2,126.0 272.1,126.3 275.0,126.5 277.8,126.7 280.4,126.9 283.0,127.0 285.5,127.1 287.9,127.1 290.2,127.1 292.5,127.1 294.8,127.0 296.9,126.9 299.1,126.8 301.1,126.6 303.2,126.5 305.2,126.3 307.1,126.2 309.0,126.0 310.8,125.8 312.3,125.7 313.7,125.5 315.0,125.3 316.3,125.1 317.6,124.9 318.9,124.7 320.3,124.4 321.9,124.1 323.6,123.8 325.7,123.4 328.0,123.0 330.6,122.5 333.6,122.0 336.7,121.4 340.1,120.8 343.6,120.1 347.2,119.5 350.9,118.8 354.6,118.0 358.3,117.3 362.0,116.5 365.5,115.8 369.0,115.0 372.3,114.2 375.7,113.4 378.9,112.6 382.2,111.8 385.4,111.0 388.7,110.1 392.0,109.2 395.3,108.3 398.6,107.4 402.0,106.5 405.5,105.5 409.0,104.5 412.6,103.5 416.3,102.4 420.1,101.3 424.0,100.2 427.8,99.1 431.8,97.9 435.7,96.7 439.6,95.6 443.5,94.4 447.4,93.3 451.2,92.1 455.0,91.0 458.7,89.9 462.4,88.8 466.0,87.7 469.6,86.6 473.2,85.5 476.8,84.4 480.3,83.3 484.0,82.2 487.6,81.2 491.3,80.1 495.1,79.0 499.0,78.0 503.0,76.9 507.1,75.9 511.3,74.8 515.6,73.7 519.9,72.6 524.2,71.5 528.6,70.5 532.9,69.5 537.1,68.5 541.2,67.6 545.2,66.8 549.0,66.0 552.7,65.3 556.3,64.7 559.9,64.1 563.4,63.5 566.8,63.0 570.2,62.6 573.4,62.1 576.7,61.8 579.8,61.4 582.9,61.1 586.0,60.8 589.0,60.5 591.9,60.3 594.8,60.0 597.5,59.9 600.2,59.7 602.9,59.6 605.5,59.6 608.0,59.5 610.5,59.5 613.0,59.5 615.5,59.5 618.0,59.5 620.5,59.5 623.0,59.5 625.5,59.6 627.9,59.6 630.3,59.7 632.7,59.8 635.1,59.9 637.5,60.1 639.8,60.2 642.1,60.4 644.4,60.6 646.7,60.8 649.0,61.0 651.3,61.2 653.5,61.5 655.8,61.8 658.1,62.0 660.3,62.3 662.5,62.7 664.7,63.0 666.9,63.4 669.0,63.7 671.0,64.1 673.1,64.6 675.0,65.0 676.9,65.5 678.7,66.0 680.4,66.5 682.1,67.0 683.8,67.6 685.4,68.2 687.0,68.8 688.6,69.4 690.2,70.0 691.8,70.7 693.4,71.3 695.0,72.0 696.6,72.7 698.3,73.4 700.0,74.2 701.7,75.0 703.4,75.8 705.1,76.6 706.8,77.4 708.4,78.2 709.9,78.9 711.4,79.7 712.7,80.4 714.0,81.0 715.2,81.6 716.2,82.1 717.2,82.7 718.1,83.1 718.9,83.6 719.7,84.1 720.4,84.5 721.1,84.9 721.9,85.3 722.6,85.7 723.3,86.1 724.0,86.5 724.8,86.9 725.5,87.3 726.3,87.7 727.1,88.1 727.9,88.5 728.6,88.8 729.3,89.2 730.0,89.5 730.6,89.8 731.2,90.1 731.6,90.3 732.0,90.5 1018,90.5" stroke="#fff" stroke-width="1.4" fill="none"/><rect x="153.0" y="89.0" width="3" height="3" fill="#0a0a9a"/><rect x="234.0" y="142.0" width="3" height="3" fill="#0a0a9a"/><rect x="647.0" y="41.0" width="3" height="3" fill="#0a0a9a"/><rect x="813.0" y="137.0" width="3" height="3" fill="#0a0a9a"/><rect x="731.0" y="89.0" width="3" height="3" fill="#0a0a9a"/><rect x="891.5" y="-0.5" width="126" height="62" fill="#999983" stroke="#000"/><rect x="892" y="0" width="105" height="21" fill="#000"/><path d="M997.5 0V62 M997 20.5H1017 M997 41.5H1017" stroke="#000" fill="none"/><path d="M1003 15h9l-4.5 -9z M1003 47h9l-4.5 9z" fill="#5a5a4c"/><text x="895" y="16" fill="#fff" font-size="11.6">sphere2.rotx</text><text x="895" y="36" fill="#00e800" font-size="11.6">sphere2.roty</text><text x="895" y="56" fill="#1010e0" font-size="11.6">sphere2.rotz</text></svg></div>
<div class="bp" style="left:0;width:124px"></div><div class="a" style="left:124px;top:942px;width:4px;height:82px;background:#000"></div><div class="rb" style="left:6px;top:947px;width:21px;height:71px"></div><i class="sw" style="left:31px;top:948px;background:#00a800"></i><i class="sw" style="left:53px;top:948px;background:#2a1a38"></i><i class="sw" style="left:75px;top:948px;background:#340000"></i><i class="sw" style="left:97px;top:948px;background:#141414"></i><i class="sw" style="left:31px;top:972px;background:#0000a8"></i><i class="sw" style="left:53px;top:972px;background:#a80000"></i><i class="sw" style="left:75px;top:972px;background:#a83400"></i><i class="sw" style="left:97px;top:972px;background:#000034"></i><i class="sw" style="left:31px;top:996px;background:#000000"></i><i class="sw" style="left:53px;top:996px;background:#00a8a8"></i><i class="sw" style="left:75px;top:996px;background:#a8a800"></i><i class="sw" style="left:97px;top:996px;background:#003000"></i>
<div class="bp" style="left:128px;width:1024px"></div><div class="a" style="left:1152px;top:942px;width:4px;height:82px;background:#000"></div><div class="sk" style="left:131px;top:947px;width:960px;height:25px"><svg class="a" style="left:0;top:0" width="26" height="23" viewBox="0 0 26 23"><path d="M1 22.5L11.5 1.5" stroke="#e0e0e0" fill="none"/><path d="M11.5 1.5L22 22.5H1" stroke="#303030" fill="none"/></svg></div><div class="sk" style="left:1093px;top:947px;width:54px;height:25px;line-height:21px;font-size:11.5px"><span style="left:5px">1</span></div><div class="sk" style="left:131px;top:975px;width:797px;height:22px"><span style="left:7px">L:</span><span style="left:27px">Free Drag</span><span style="left:262px">M:</span><span style="left:290px">Vertical Drag</span><span style="left:526px">R:</span><span style="left:553px">Horizontal Drag</span></div><div class="sk" style="left:131px;top:1001px;width:152px;height:21px;line-height:18px"><span style="left:7px">User:</span><span style="left:48px">fgiard</span></div><div class="sk" style="left:285px;top:1001px;width:643px;height:21px;line-height:18px"><span style="left:3px">Mode:</span><span style="left:84px">* Drag</span></div><div class="rb" style="left:935px;top:976px;width:38px;height:21px;background:#d4d4d4;line-height:20px"><b>LCL</b></div><i class="sl" style="left:977px"></i><i class="sl" style="left:1020px"></i><i class="sl" style="left:1063px"></i><i class="sl" style="left:1106px"></i><div class="rb" style="left:935px;top:1000px;width:38px;height:20px;line-height:19px"><b>OBJ</b></div><div class="rb" style="left:978px;top:1000px;width:38px;height:20px;line-height:19px"><b>TAG</b></div><div class="rb" style="left:1021px;top:1000px;width:38px;height:20px;line-height:19px"><b>CTR</b></div><div class="rb" style="left:1064px;top:1000px;width:38px;height:20px;line-height:19px;background:#d4d4d4"><b>TXT</b></div><div class="rb" style="left:1107px;top:1000px;width:38px;height:20px;line-height:19px"><b>POL</b></div>
<div class="bp" style="left:1156px;width:124px"></div><div class="sk" style="left:1159px;top:948px;width:56px;height:24px;line-height:20px;font-size:11.5px;letter-spacing:.4px"><span style="left:5px">1</span><span style="left:44px;top:0;width:10px;height:22px;background:#262626;color:#fff;text-align:center;font-size:11px;letter-spacing:0">S</span></div><div class="sk" style="left:1217px;top:948px;width:60px;height:24px;line-height:20px;font-size:11.5px;letter-spacing:.4px"><span style="left:5px">100</span><span style="left:48px;top:0;width:10px;height:22px;background:#262626;color:#fff;text-align:center;font-size:11px;letter-spacing:0">E</span></div><div class="rb" style="left:1160px;top:976px;width:35px;height:21px;line-height:20px">L</div><div class="rb" style="left:1160px;top:1000px;width:15px;height:22px;line-height:21px">F</div><div class="rb" style="left:1180px;top:1000px;width:15px;height:22px;line-height:21px">K</div><div class="rb" style="left:1200px;top:976px;width:35px;height:46px"><svg class="a" style="left:0;top:0" width="33" height="44"><path d="M10.5 23.5L22 13V34z" fill="#0a0a0a"/></svg></div><div class="rb" style="left:1240px;top:976px;width:36px;height:46px"><svg class="a" style="left:0;top:0" width="34" height="44"><path d="M23 23.5L11.5 13V34z" fill="#0a0a0a"/></svg></div>
</div>
</body></html>
